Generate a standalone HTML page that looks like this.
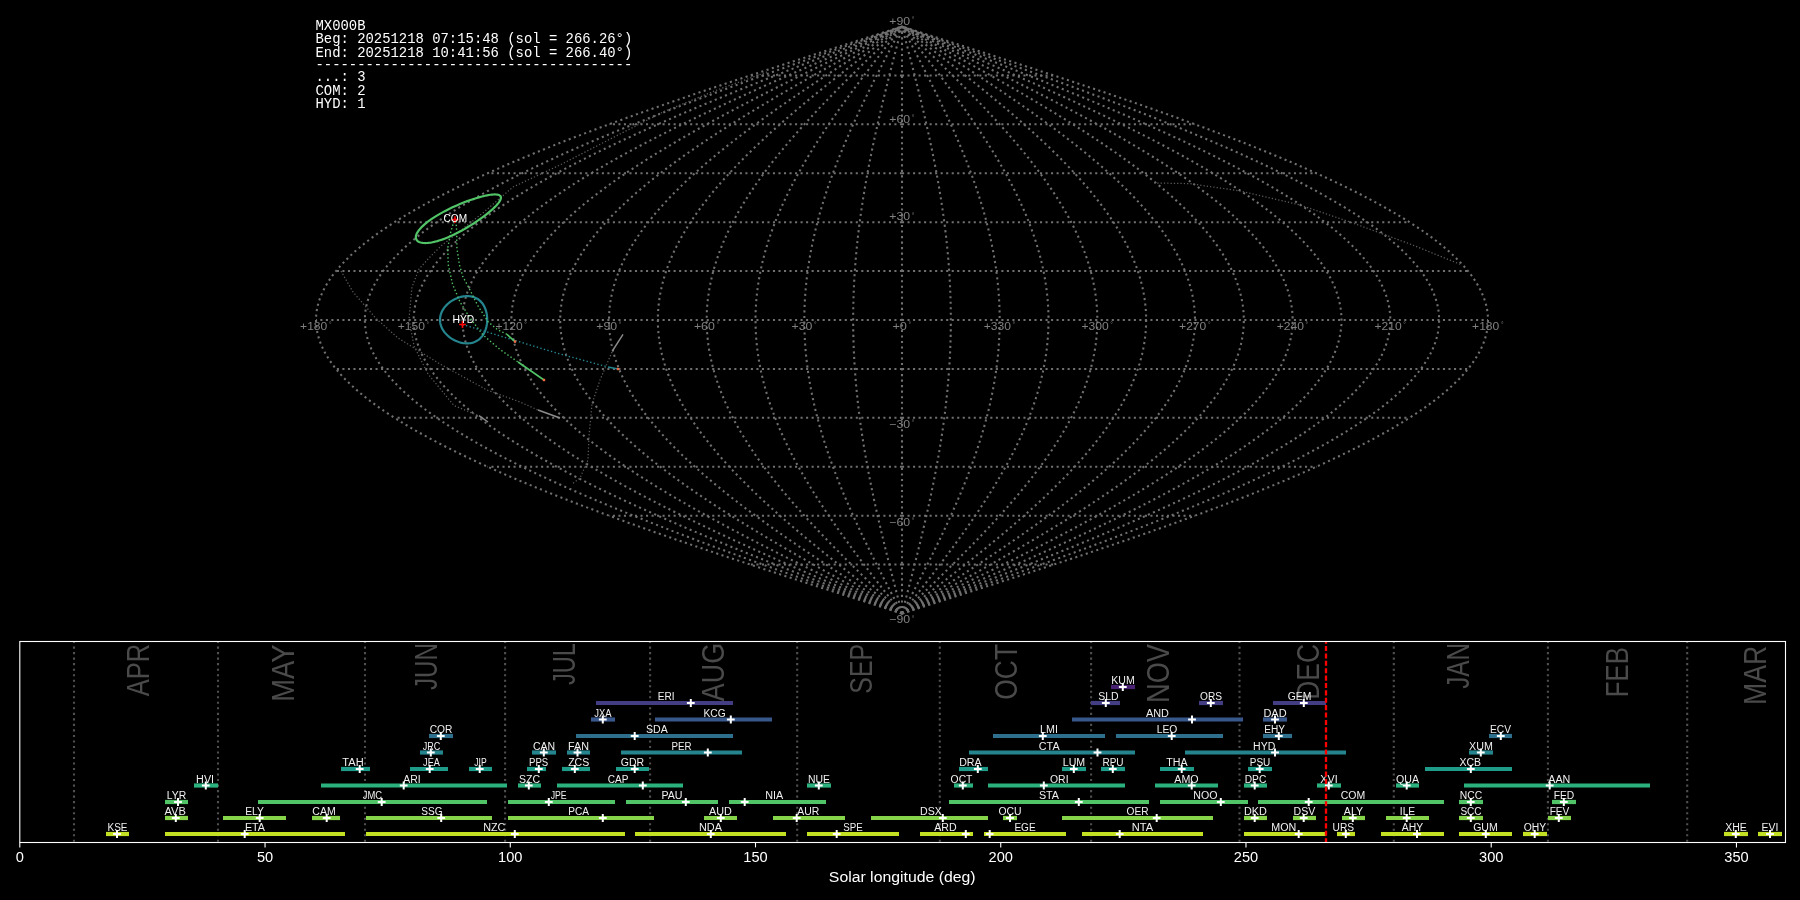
<!DOCTYPE html>
<html><head><meta charset="utf-8"><style>
html,body{margin:0;padding:0;background:#000;width:1800px;height:900px;overflow:hidden}
svg{display:block;will-change:transform}
</style></head><body>
<svg width="1800" height="900" viewBox="0 0 1800 900">
<rect width="1800" height="900" fill="#000"/>
<g fill="none" stroke="#707070" stroke-width="2.08" stroke-dasharray="2.08 3.44">
<path d="M902 564.58 H750.33"/>
<path d="M902 564.58 H1053.67"/>
<path d="M902 515.67 H609"/>
<path d="M902 515.67 H1195"/>
<path d="M902 466.75 H487.64"/>
<path d="M902 466.75 H1316.36"/>
<path d="M902 417.83 H394.51"/>
<path d="M902 417.83 H1409.49"/>
<path d="M902 368.92 H335.97"/>
<path d="M902 368.92 H1468.03"/>
<path d="M902 320 H316"/>
<path d="M902 320 H1488"/>
<path d="M902 271.08 H335.97"/>
<path d="M902 271.08 H1468.03"/>
<path d="M902 222.17 H394.51"/>
<path d="M902 222.17 H1409.49"/>
<path d="M902 173.25 H487.64"/>
<path d="M902 173.25 H1316.36"/>
<path d="M902 124.33 H609"/>
<path d="M902 124.33 H1195"/>
<path d="M902 75.42 H750.33"/>
<path d="M902 75.42 H1053.67"/>
<path d="M902 613.5 L917.34 608.61 L932.67 603.72 L947.98 598.83 L963.25 593.93 L978.49 589.04 L993.67 584.15 L1008.79 579.26 L1023.84 574.37 L1038.8 569.48 L1053.67 564.58 L1068.43 559.69 L1083.08 554.8 L1097.61 549.91 L1112 545.02 L1126.25 540.12 L1140.35 535.23 L1154.28 530.34 L1168.04 525.45 L1181.62 520.56 L1195 515.67 L1208.18 510.77 L1221.16 505.88 L1233.91 500.99 L1246.44 496.1 L1258.73 491.21 L1270.78 486.32 L1282.58 481.43 L1294.11 476.53 L1305.38 471.64 L1316.36 466.75 L1327.07 461.86 L1337.48 456.97 L1347.6 452.07 L1357.41 447.18 L1366.91 442.29 L1376.08 437.4 L1384.94 432.51 L1393.46 427.62 L1401.65 422.73 L1409.49 417.83 L1416.99 412.94 L1424.13 408.05 L1430.91 403.16 L1437.34 398.27 L1443.39 393.38 L1449.08 388.48 L1454.39 383.59 L1459.32 378.7 L1463.87 373.81 L1468.03 368.92 L1471.81 364.02 L1475.19 359.13 L1478.19 354.24 L1480.79 349.35 L1482.99 344.46 L1484.79 339.57 L1486.19 334.68 L1487.2 329.78 L1487.8 324.89 L1488 320 L1487.8 315.11 L1487.2 310.22 L1486.19 305.32 L1484.79 300.43 L1482.99 295.54 L1480.79 290.65 L1478.19 285.76 L1475.19 280.87 L1471.81 275.98 L1468.03 271.08 L1463.87 266.19 L1459.32 261.3 L1454.39 256.41 L1449.08 251.52 L1443.39 246.62 L1437.34 241.73 L1430.91 236.84 L1424.13 231.95 L1416.99 227.06 L1409.49 222.17 L1401.65 217.28 L1393.46 212.38 L1384.94 207.49 L1376.08 202.6 L1366.91 197.71 L1357.41 192.82 L1347.6 187.93 L1337.48 183.03 L1327.07 178.14 L1316.36 173.25 L1305.38 168.36 L1294.11 163.47 L1282.58 158.57 L1270.78 153.68 L1258.73 148.79 L1246.44 143.9 L1233.91 139.01 L1221.16 134.12 L1208.18 129.22 L1195 124.33 L1181.62 119.44 L1168.04 114.55 L1154.28 109.66 L1140.35 104.77 L1126.25 99.88 L1112 94.98 L1097.61 90.09 L1083.08 85.2 L1068.43 80.31 L1053.67 75.42 L1038.8 70.53 L1023.84 65.63 L1008.79 60.74 L993.67 55.85 L978.49 50.96 L963.25 46.07 L947.98 41.18 L932.67 36.28 L917.34 31.39 L902 26.5"/>
<path d="M902 613.5 L916.06 608.61 L930.11 603.72 L944.15 598.83 L958.15 593.93 L972.11 589.04 L986.03 584.15 L999.89 579.26 L1013.68 574.37 L1027.4 569.48 L1041.03 564.58 L1054.56 559.69 L1067.99 554.8 L1081.31 549.91 L1094.5 545.02 L1107.56 540.12 L1120.49 535.23 L1133.26 530.34 L1145.87 525.45 L1158.31 520.56 L1170.58 515.67 L1182.67 510.77 L1194.56 505.88 L1206.25 500.99 L1217.74 496.1 L1229.01 491.21 L1240.05 486.32 L1250.86 481.43 L1261.43 476.53 L1271.76 471.64 L1281.83 466.75 L1291.65 461.86 L1301.19 456.97 L1310.46 452.07 L1319.46 447.18 L1328.16 442.29 L1336.58 437.4 L1344.69 432.51 L1352.51 427.62 L1360.01 422.73 L1367.2 417.83 L1374.07 412.94 L1380.62 408.05 L1386.84 403.16 L1392.73 398.27 L1398.28 393.38 L1403.49 388.48 L1408.36 383.59 L1412.88 378.7 L1417.05 373.81 L1420.86 368.92 L1424.32 364.02 L1427.43 359.13 L1430.17 354.24 L1432.55 349.35 L1434.57 344.46 L1436.22 339.57 L1437.51 334.68 L1438.43 329.78 L1438.98 324.89 L1439.17 320 L1438.98 315.11 L1438.43 310.22 L1437.51 305.32 L1436.22 300.43 L1434.57 295.54 L1432.55 290.65 L1430.17 285.76 L1427.43 280.87 L1424.32 275.98 L1420.86 271.08 L1417.05 266.19 L1412.88 261.3 L1408.36 256.41 L1403.49 251.52 L1398.28 246.62 L1392.73 241.73 L1386.84 236.84 L1380.62 231.95 L1374.07 227.06 L1367.2 222.17 L1360.01 217.28 L1352.51 212.38 L1344.69 207.49 L1336.58 202.6 L1328.16 197.71 L1319.46 192.82 L1310.46 187.93 L1301.19 183.03 L1291.65 178.14 L1281.83 173.25 L1271.76 168.36 L1261.43 163.47 L1250.86 158.57 L1240.05 153.68 L1229.01 148.79 L1217.74 143.9 L1206.25 139.01 L1194.56 134.12 L1182.67 129.22 L1170.58 124.33 L1158.31 119.44 L1145.87 114.55 L1133.26 109.66 L1120.49 104.77 L1107.56 99.88 L1094.5 94.98 L1081.31 90.09 L1067.99 85.2 L1054.56 80.31 L1041.03 75.42 L1027.4 70.53 L1013.68 65.63 L999.89 60.74 L986.03 55.85 L972.11 50.96 L958.15 46.07 L944.15 41.18 L930.11 36.28 L916.06 31.39 L902 26.5"/>
<path d="M902 613.5 L914.78 608.61 L927.56 603.72 L940.31 598.83 L953.04 593.93 L965.74 589.04 L978.39 584.15 L990.99 579.26 L1003.53 574.37 L1016 569.48 L1028.39 564.58 L1040.69 559.69 L1052.9 554.8 L1065.01 549.91 L1077 545.02 L1088.88 540.12 L1100.62 535.23 L1112.23 530.34 L1123.7 525.45 L1135.01 520.56 L1146.17 515.67 L1157.15 510.77 L1167.97 505.88 L1178.6 500.99 L1189.04 496.1 L1199.28 491.21 L1209.32 486.32 L1219.15 481.43 L1228.76 476.53 L1238.15 471.64 L1247.3 466.75 L1256.22 461.86 L1264.9 456.97 L1273.33 452.07 L1281.51 447.18 L1289.42 442.29 L1297.07 437.4 L1304.45 432.51 L1311.55 427.62 L1318.37 422.73 L1324.91 417.83 L1331.16 412.94 L1337.11 408.05 L1342.76 403.16 L1348.11 398.27 L1353.16 393.38 L1357.9 388.48 L1362.32 383.59 L1366.43 378.7 L1370.22 373.81 L1373.69 368.92 L1376.84 364.02 L1379.66 359.13 L1382.16 354.24 L1384.32 349.35 L1386.16 344.46 L1387.66 339.57 L1388.83 334.68 L1389.66 329.78 L1390.17 324.89 L1390.33 320 L1390.17 315.11 L1389.66 310.22 L1388.83 305.32 L1387.66 300.43 L1386.16 295.54 L1384.32 290.65 L1382.16 285.76 L1379.66 280.87 L1376.84 275.98 L1373.69 271.08 L1370.22 266.19 L1366.43 261.3 L1362.32 256.41 L1357.9 251.52 L1353.16 246.62 L1348.11 241.73 L1342.76 236.84 L1337.11 231.95 L1331.16 227.06 L1324.91 222.17 L1318.37 217.28 L1311.55 212.38 L1304.45 207.49 L1297.07 202.6 L1289.42 197.71 L1281.51 192.82 L1273.33 187.93 L1264.9 183.03 L1256.22 178.14 L1247.3 173.25 L1238.15 168.36 L1228.76 163.47 L1219.15 158.57 L1209.32 153.68 L1199.28 148.79 L1189.04 143.9 L1178.6 139.01 L1167.97 134.12 L1157.15 129.22 L1146.17 124.33 L1135.01 119.44 L1123.7 114.55 L1112.23 109.66 L1100.62 104.77 L1088.88 99.88 L1077 94.98 L1065.01 90.09 L1052.9 85.2 L1040.69 80.31 L1028.39 75.42 L1016 70.53 L1003.53 65.63 L990.99 60.74 L978.39 55.85 L965.74 50.96 L953.04 46.07 L940.31 41.18 L927.56 36.28 L914.78 31.39 L902 26.5"/>
<path d="M902 613.5 L913.5 608.61 L925 603.72 L936.48 598.83 L947.94 593.93 L959.37 589.04 L970.75 584.15 L982.09 579.26 L993.38 574.37 L1004.6 569.48 L1015.75 564.58 L1026.82 559.69 L1037.81 554.8 L1048.71 549.91 L1059.5 545.02 L1070.19 540.12 L1080.76 535.23 L1091.21 530.34 L1101.53 525.45 L1111.71 520.56 L1121.75 515.67 L1131.64 510.77 L1141.37 505.88 L1150.94 500.99 L1160.33 496.1 L1169.55 491.21 L1178.59 486.32 L1187.43 481.43 L1196.08 476.53 L1204.53 471.64 L1212.77 466.75 L1220.8 461.86 L1228.61 456.97 L1236.2 452.07 L1243.56 447.18 L1250.68 442.29 L1257.56 437.4 L1264.2 432.51 L1270.6 427.62 L1276.74 422.73 L1282.62 417.83 L1288.24 412.94 L1293.6 408.05 L1298.69 403.16 L1303.5 398.27 L1308.05 393.38 L1312.31 388.48 L1316.29 383.59 L1319.99 378.7 L1323.4 373.81 L1326.52 368.92 L1329.36 364.02 L1331.9 359.13 L1334.14 354.24 L1336.09 349.35 L1337.74 344.46 L1339.09 339.57 L1340.15 334.68 L1340.9 329.78 L1341.35 324.89 L1341.5 320 L1341.35 315.11 L1340.9 310.22 L1340.15 305.32 L1339.09 300.43 L1337.74 295.54 L1336.09 290.65 L1334.14 285.76 L1331.9 280.87 L1329.36 275.98 L1326.52 271.08 L1323.4 266.19 L1319.99 261.3 L1316.29 256.41 L1312.31 251.52 L1308.05 246.62 L1303.5 241.73 L1298.69 236.84 L1293.6 231.95 L1288.24 227.06 L1282.62 222.17 L1276.74 217.28 L1270.6 212.38 L1264.2 207.49 L1257.56 202.6 L1250.68 197.71 L1243.56 192.82 L1236.2 187.93 L1228.61 183.03 L1220.8 178.14 L1212.77 173.25 L1204.53 168.36 L1196.08 163.47 L1187.43 158.57 L1178.59 153.68 L1169.55 148.79 L1160.33 143.9 L1150.94 139.01 L1141.37 134.12 L1131.64 129.22 L1121.75 124.33 L1111.71 119.44 L1101.53 114.55 L1091.21 109.66 L1080.76 104.77 L1070.19 99.88 L1059.5 94.98 L1048.71 90.09 L1037.81 85.2 L1026.82 80.31 L1015.75 75.42 L1004.6 70.53 L993.38 65.63 L982.09 60.74 L970.75 55.85 L959.37 50.96 L947.94 46.07 L936.48 41.18 L925 36.28 L913.5 31.39 L902 26.5"/>
<path d="M902 613.5 L912.23 608.61 L922.45 603.72 L932.65 598.83 L942.84 593.93 L952.99 589.04 L963.11 584.15 L973.19 579.26 L983.22 574.37 L993.2 569.48 L1003.11 564.58 L1012.96 559.69 L1022.72 554.8 L1032.41 549.91 L1042 545.02 L1051.5 540.12 L1060.9 535.23 L1070.19 530.34 L1079.36 525.45 L1088.41 520.56 L1097.33 515.67 L1106.12 510.77 L1114.77 505.88 L1123.28 500.99 L1131.63 496.1 L1139.82 491.21 L1147.85 486.32 L1155.72 481.43 L1163.41 476.53 L1170.92 471.64 L1178.24 466.75 L1185.38 461.86 L1192.32 456.97 L1199.07 452.07 L1205.61 447.18 L1211.94 442.29 L1218.06 437.4 L1223.96 432.51 L1229.64 427.62 L1235.1 422.73 L1240.33 417.83 L1245.32 412.94 L1250.09 408.05 L1254.61 403.16 L1258.89 398.27 L1262.93 393.38 L1266.72 388.48 L1270.26 383.59 L1273.55 378.7 L1276.58 373.81 L1279.36 368.92 L1281.87 364.02 L1284.13 359.13 L1286.12 354.24 L1287.86 349.35 L1289.32 344.46 L1290.53 339.57 L1291.46 334.68 L1292.13 329.78 L1292.53 324.89 L1292.67 320 L1292.53 315.11 L1292.13 310.22 L1291.46 305.32 L1290.53 300.43 L1289.32 295.54 L1287.86 290.65 L1286.12 285.76 L1284.13 280.87 L1281.87 275.98 L1279.36 271.08 L1276.58 266.19 L1273.55 261.3 L1270.26 256.41 L1266.72 251.52 L1262.93 246.62 L1258.89 241.73 L1254.61 236.84 L1250.09 231.95 L1245.32 227.06 L1240.33 222.17 L1235.1 217.28 L1229.64 212.38 L1223.96 207.49 L1218.06 202.6 L1211.94 197.71 L1205.61 192.82 L1199.07 187.93 L1192.32 183.03 L1185.38 178.14 L1178.24 173.25 L1170.92 168.36 L1163.41 163.47 L1155.72 158.57 L1147.85 153.68 L1139.82 148.79 L1131.63 143.9 L1123.28 139.01 L1114.77 134.12 L1106.12 129.22 L1097.33 124.33 L1088.41 119.44 L1079.36 114.55 L1070.19 109.66 L1060.9 104.77 L1051.5 99.88 L1042 94.98 L1032.41 90.09 L1022.72 85.2 L1012.96 80.31 L1003.11 75.42 L993.2 70.53 L983.22 65.63 L973.19 60.74 L963.11 55.85 L952.99 50.96 L942.84 46.07 L932.65 41.18 L922.45 36.28 L912.23 31.39 L902 26.5"/>
<path d="M902 613.5 L910.95 608.61 L919.89 603.72 L928.82 598.83 L937.73 593.93 L946.62 589.04 L955.47 584.15 L964.29 579.26 L973.07 574.37 L981.8 569.48 L990.47 564.58 L999.09 559.69 L1007.63 554.8 L1016.11 549.91 L1024.5 545.02 L1032.81 540.12 L1041.04 535.23 L1049.16 530.34 L1057.19 525.45 L1065.11 520.56 L1072.92 515.67 L1080.61 510.77 L1088.18 505.88 L1095.62 500.99 L1102.92 496.1 L1110.09 491.21 L1117.12 486.32 L1124 481.43 L1130.73 476.53 L1137.3 471.64 L1143.71 466.75 L1149.96 461.86 L1156.03 456.97 L1161.93 452.07 L1167.65 447.18 L1173.19 442.29 L1178.55 437.4 L1183.71 432.51 L1188.69 427.62 L1193.46 422.73 L1198.04 417.83 L1202.41 412.94 L1206.58 408.05 L1210.53 403.16 L1214.28 398.27 L1217.81 393.38 L1221.13 388.48 L1224.23 383.59 L1227.1 378.7 L1229.76 373.81 L1232.19 368.92 L1234.39 364.02 L1236.36 359.13 L1238.11 354.24 L1239.62 349.35 L1240.91 344.46 L1241.96 339.57 L1242.78 334.68 L1243.36 329.78 L1243.72 324.89 L1243.83 320 L1243.72 315.11 L1243.36 310.22 L1242.78 305.32 L1241.96 300.43 L1240.91 295.54 L1239.62 290.65 L1238.11 285.76 L1236.36 280.87 L1234.39 275.98 L1232.19 271.08 L1229.76 266.19 L1227.1 261.3 L1224.23 256.41 L1221.13 251.52 L1217.81 246.62 L1214.28 241.73 L1210.53 236.84 L1206.58 231.95 L1202.41 227.06 L1198.04 222.17 L1193.46 217.28 L1188.69 212.38 L1183.71 207.49 L1178.55 202.6 L1173.19 197.71 L1167.65 192.82 L1161.93 187.93 L1156.03 183.03 L1149.96 178.14 L1143.71 173.25 L1137.3 168.36 L1130.73 163.47 L1124 158.57 L1117.12 153.68 L1110.09 148.79 L1102.92 143.9 L1095.62 139.01 L1088.18 134.12 L1080.61 129.22 L1072.92 124.33 L1065.11 119.44 L1057.19 114.55 L1049.16 109.66 L1041.04 104.77 L1032.81 99.88 L1024.5 94.98 L1016.11 90.09 L1007.63 85.2 L999.09 80.31 L990.47 75.42 L981.8 70.53 L973.07 65.63 L964.29 60.74 L955.47 55.85 L946.62 50.96 L937.73 46.07 L928.82 41.18 L919.89 36.28 L910.95 31.39 L902 26.5"/>
<path d="M902 613.5 L909.67 608.61 L917.33 603.72 L924.99 598.83 L932.63 593.93 L940.24 589.04 L947.84 584.15 L955.4 579.26 L962.92 574.37 L970.4 569.48 L977.83 564.58 L985.22 559.69 L992.54 554.8 L999.81 549.91 L1007 545.02 L1014.13 540.12 L1021.17 535.23 L1028.14 530.34 L1035.02 525.45 L1041.81 520.56 L1048.5 515.67 L1055.09 510.77 L1061.58 505.88 L1067.96 500.99 L1074.22 496.1 L1080.37 491.21 L1086.39 486.32 L1092.29 481.43 L1098.06 476.53 L1103.69 471.64 L1109.18 466.75 L1114.53 461.86 L1119.74 456.97 L1124.8 452.07 L1129.7 447.18 L1134.45 442.29 L1139.04 437.4 L1143.47 432.51 L1147.73 427.62 L1151.82 422.73 L1155.75 417.83 L1159.49 412.94 L1163.06 408.05 L1166.46 403.16 L1169.67 398.27 L1172.7 393.38 L1175.54 388.48 L1178.19 383.59 L1180.66 378.7 L1182.93 373.81 L1185.02 368.92 L1186.9 364.02 L1188.6 359.13 L1190.09 354.24 L1191.39 349.35 L1192.49 344.46 L1193.39 339.57 L1194.1 334.68 L1194.6 329.78 L1194.9 324.89 L1195 320 L1194.9 315.11 L1194.6 310.22 L1194.1 305.32 L1193.39 300.43 L1192.49 295.54 L1191.39 290.65 L1190.09 285.76 L1188.6 280.87 L1186.9 275.98 L1185.02 271.08 L1182.93 266.19 L1180.66 261.3 L1178.19 256.41 L1175.54 251.52 L1172.7 246.62 L1169.67 241.73 L1166.46 236.84 L1163.06 231.95 L1159.49 227.06 L1155.75 222.17 L1151.82 217.28 L1147.73 212.38 L1143.47 207.49 L1139.04 202.6 L1134.45 197.71 L1129.7 192.82 L1124.8 187.93 L1119.74 183.03 L1114.53 178.14 L1109.18 173.25 L1103.69 168.36 L1098.06 163.47 L1092.29 158.57 L1086.39 153.68 L1080.37 148.79 L1074.22 143.9 L1067.96 139.01 L1061.58 134.12 L1055.09 129.22 L1048.5 124.33 L1041.81 119.44 L1035.02 114.55 L1028.14 109.66 L1021.17 104.77 L1014.13 99.88 L1007 94.98 L999.81 90.09 L992.54 85.2 L985.22 80.31 L977.83 75.42 L970.4 70.53 L962.92 65.63 L955.4 60.74 L947.84 55.85 L940.24 50.96 L932.63 46.07 L924.99 41.18 L917.33 36.28 L909.67 31.39 L902 26.5"/>
<path d="M902 613.5 L908.39 608.61 L914.78 603.72 L921.16 598.83 L927.52 593.93 L933.87 589.04 L940.2 584.15 L946.5 579.26 L952.77 574.37 L959 569.48 L965.19 564.58 L971.35 559.69 L977.45 554.8 L983.5 549.91 L989.5 545.02 L995.44 540.12 L1001.31 535.23 L1007.12 530.34 L1012.85 525.45 L1018.51 520.56 L1024.08 515.67 L1029.58 510.77 L1034.98 505.88 L1040.3 500.99 L1045.52 496.1 L1050.64 491.21 L1055.66 486.32 L1060.57 481.43 L1065.38 476.53 L1070.07 471.64 L1074.65 466.75 L1079.11 461.86 L1083.45 456.97 L1087.67 452.07 L1091.75 447.18 L1095.71 442.29 L1099.53 437.4 L1103.22 432.51 L1106.78 427.62 L1110.19 422.73 L1113.45 417.83 L1116.58 412.94 L1119.55 408.05 L1122.38 403.16 L1125.06 398.27 L1127.58 393.38 L1129.95 388.48 L1132.16 383.59 L1134.22 378.7 L1136.11 373.81 L1137.85 368.92 L1139.42 364.02 L1140.83 359.13 L1142.08 354.24 L1143.16 349.35 L1144.08 344.46 L1144.83 339.57 L1145.41 334.68 L1145.83 329.78 L1146.08 324.89 L1146.17 320 L1146.08 315.11 L1145.83 310.22 L1145.41 305.32 L1144.83 300.43 L1144.08 295.54 L1143.16 290.65 L1142.08 285.76 L1140.83 280.87 L1139.42 275.98 L1137.85 271.08 L1136.11 266.19 L1134.22 261.3 L1132.16 256.41 L1129.95 251.52 L1127.58 246.62 L1125.06 241.73 L1122.38 236.84 L1119.55 231.95 L1116.58 227.06 L1113.45 222.17 L1110.19 217.28 L1106.78 212.38 L1103.22 207.49 L1099.53 202.6 L1095.71 197.71 L1091.75 192.82 L1087.67 187.93 L1083.45 183.03 L1079.11 178.14 L1074.65 173.25 L1070.07 168.36 L1065.38 163.47 L1060.57 158.57 L1055.66 153.68 L1050.64 148.79 L1045.52 143.9 L1040.3 139.01 L1034.98 134.12 L1029.58 129.22 L1024.08 124.33 L1018.51 119.44 L1012.85 114.55 L1007.12 109.66 L1001.31 104.77 L995.44 99.88 L989.5 94.98 L983.5 90.09 L977.45 85.2 L971.35 80.31 L965.19 75.42 L959 70.53 L952.77 65.63 L946.5 60.74 L940.2 55.85 L933.87 50.96 L927.52 46.07 L921.16 41.18 L914.78 36.28 L908.39 31.39 L902 26.5"/>
<path d="M902 613.5 L907.11 608.61 L912.22 603.72 L917.33 598.83 L922.42 593.93 L927.5 589.04 L932.56 584.15 L937.6 579.26 L942.61 574.37 L947.6 569.48 L952.56 564.58 L957.48 559.69 L962.36 554.8 L967.2 549.91 L972 545.02 L976.75 540.12 L981.45 535.23 L986.09 530.34 L990.68 525.45 L995.21 520.56 L999.67 515.67 L1004.06 510.77 L1008.39 505.88 L1012.64 500.99 L1016.81 496.1 L1020.91 491.21 L1024.93 486.32 L1028.86 481.43 L1032.7 476.53 L1036.46 471.64 L1040.12 466.75 L1043.69 461.86 L1047.16 456.97 L1050.53 452.07 L1053.8 447.18 L1056.97 442.29 L1060.03 437.4 L1062.98 432.51 L1065.82 427.62 L1068.55 422.73 L1071.16 417.83 L1073.66 412.94 L1076.04 408.05 L1078.3 403.16 L1080.45 398.27 L1082.46 393.38 L1084.36 388.48 L1086.13 383.59 L1087.77 378.7 L1089.29 373.81 L1090.68 368.92 L1091.94 364.02 L1093.06 359.13 L1094.06 354.24 L1094.93 349.35 L1095.66 344.46 L1096.26 339.57 L1096.73 334.68 L1097.07 329.78 L1097.27 324.89 L1097.33 320 L1097.27 315.11 L1097.07 310.22 L1096.73 305.32 L1096.26 300.43 L1095.66 295.54 L1094.93 290.65 L1094.06 285.76 L1093.06 280.87 L1091.94 275.98 L1090.68 271.08 L1089.29 266.19 L1087.77 261.3 L1086.13 256.41 L1084.36 251.52 L1082.46 246.62 L1080.45 241.73 L1078.3 236.84 L1076.04 231.95 L1073.66 227.06 L1071.16 222.17 L1068.55 217.28 L1065.82 212.38 L1062.98 207.49 L1060.03 202.6 L1056.97 197.71 L1053.8 192.82 L1050.53 187.93 L1047.16 183.03 L1043.69 178.14 L1040.12 173.25 L1036.46 168.36 L1032.7 163.47 L1028.86 158.57 L1024.93 153.68 L1020.91 148.79 L1016.81 143.9 L1012.64 139.01 L1008.39 134.12 L1004.06 129.22 L999.67 124.33 L995.21 119.44 L990.68 114.55 L986.09 109.66 L981.45 104.77 L976.75 99.88 L972 94.98 L967.2 90.09 L962.36 85.2 L957.48 80.31 L952.56 75.42 L947.6 70.53 L942.61 65.63 L937.6 60.74 L932.56 55.85 L927.5 50.96 L922.42 46.07 L917.33 41.18 L912.22 36.28 L907.11 31.39 L902 26.5"/>
<path d="M902 613.5 L905.83 608.61 L909.67 603.72 L913.49 598.83 L917.31 593.93 L921.12 589.04 L924.92 584.15 L928.7 579.26 L932.46 574.37 L936.2 569.48 L939.92 564.58 L943.61 559.69 L947.27 554.8 L950.9 549.91 L954.5 545.02 L958.06 540.12 L961.59 535.23 L965.07 530.34 L968.51 525.45 L971.9 520.56 L975.25 515.67 L978.55 510.77 L981.79 505.88 L984.98 500.99 L988.11 496.1 L991.18 491.21 L994.2 486.32 L997.14 481.43 L1000.03 476.53 L1002.84 471.64 L1005.59 466.75 L1008.27 461.86 L1010.87 456.97 L1013.4 452.07 L1015.85 447.18 L1018.23 442.29 L1020.52 437.4 L1022.73 432.51 L1024.87 427.62 L1026.91 422.73 L1028.87 417.83 L1030.75 412.94 L1032.53 408.05 L1034.23 403.16 L1035.83 398.27 L1037.35 393.38 L1038.77 388.48 L1040.1 383.59 L1041.33 378.7 L1042.47 373.81 L1043.51 368.92 L1044.45 364.02 L1045.3 359.13 L1046.05 354.24 L1046.7 349.35 L1047.25 344.46 L1047.7 339.57 L1048.05 334.68 L1048.3 329.78 L1048.45 324.89 L1048.5 320 L1048.45 315.11 L1048.3 310.22 L1048.05 305.32 L1047.7 300.43 L1047.25 295.54 L1046.7 290.65 L1046.05 285.76 L1045.3 280.87 L1044.45 275.98 L1043.51 271.08 L1042.47 266.19 L1041.33 261.3 L1040.1 256.41 L1038.77 251.52 L1037.35 246.62 L1035.83 241.73 L1034.23 236.84 L1032.53 231.95 L1030.75 227.06 L1028.87 222.17 L1026.91 217.28 L1024.87 212.38 L1022.73 207.49 L1020.52 202.6 L1018.23 197.71 L1015.85 192.82 L1013.4 187.93 L1010.87 183.03 L1008.27 178.14 L1005.59 173.25 L1002.84 168.36 L1000.03 163.47 L997.14 158.57 L994.2 153.68 L991.18 148.79 L988.11 143.9 L984.98 139.01 L981.79 134.12 L978.55 129.22 L975.25 124.33 L971.9 119.44 L968.51 114.55 L965.07 109.66 L961.59 104.77 L958.06 99.88 L954.5 94.98 L950.9 90.09 L947.27 85.2 L943.61 80.31 L939.92 75.42 L936.2 70.53 L932.46 65.63 L928.7 60.74 L924.92 55.85 L921.12 50.96 L917.31 46.07 L913.49 41.18 L909.67 36.28 L905.83 31.39 L902 26.5"/>
<path d="M902 613.5 L904.56 608.61 L907.11 603.72 L909.66 598.83 L912.21 593.93 L914.75 589.04 L917.28 584.15 L919.8 579.26 L922.31 574.37 L924.8 569.48 L927.28 564.58 L929.74 559.69 L932.18 554.8 L934.6 549.91 L937 545.02 L939.38 540.12 L941.72 535.23 L944.05 530.34 L946.34 525.45 L948.6 520.56 L950.83 515.67 L953.03 510.77 L955.19 505.88 L957.32 500.99 L959.41 496.1 L961.46 491.21 L963.46 486.32 L965.43 481.43 L967.35 476.53 L969.23 471.64 L971.06 466.75 L972.84 461.86 L974.58 456.97 L976.27 452.07 L977.9 447.18 L979.48 442.29 L981.01 437.4 L982.49 432.51 L983.91 427.62 L985.27 422.73 L986.58 417.83 L987.83 412.94 L989.02 408.05 L990.15 403.16 L991.22 398.27 L992.23 393.38 L993.18 388.48 L994.06 383.59 L994.89 378.7 L995.64 373.81 L996.34 368.92 L996.97 364.02 L997.53 359.13 L998.03 354.24 L998.46 349.35 L998.83 344.46 L999.13 339.57 L999.37 334.68 L999.53 329.78 L999.63 324.89 L999.67 320 L999.63 315.11 L999.53 310.22 L999.37 305.32 L999.13 300.43 L998.83 295.54 L998.46 290.65 L998.03 285.76 L997.53 280.87 L996.97 275.98 L996.34 271.08 L995.64 266.19 L994.89 261.3 L994.06 256.41 L993.18 251.52 L992.23 246.62 L991.22 241.73 L990.15 236.84 L989.02 231.95 L987.83 227.06 L986.58 222.17 L985.27 217.28 L983.91 212.38 L982.49 207.49 L981.01 202.6 L979.48 197.71 L977.9 192.82 L976.27 187.93 L974.58 183.03 L972.84 178.14 L971.06 173.25 L969.23 168.36 L967.35 163.47 L965.43 158.57 L963.46 153.68 L961.46 148.79 L959.41 143.9 L957.32 139.01 L955.19 134.12 L953.03 129.22 L950.83 124.33 L948.6 119.44 L946.34 114.55 L944.05 109.66 L941.72 104.77 L939.38 99.88 L937 94.98 L934.6 90.09 L932.18 85.2 L929.74 80.31 L927.28 75.42 L924.8 70.53 L922.31 65.63 L919.8 60.74 L917.28 55.85 L914.75 50.96 L912.21 46.07 L909.66 41.18 L907.11 36.28 L904.56 31.39 L902 26.5"/>
<path d="M902 613.5 L903.28 608.61 L904.56 603.72 L905.83 598.83 L907.1 593.93 L908.37 589.04 L909.64 584.15 L910.9 579.26 L912.15 574.37 L913.4 569.48 L914.64 564.58 L915.87 559.69 L917.09 554.8 L918.3 549.91 L919.5 545.02 L920.69 540.12 L921.86 535.23 L923.02 530.34 L924.17 525.45 L925.3 520.56 L926.42 515.67 L927.52 510.77 L928.6 505.88 L929.66 500.99 L930.7 496.1 L931.73 491.21 L932.73 486.32 L933.71 481.43 L934.68 476.53 L935.61 471.64 L936.53 466.75 L937.42 461.86 L938.29 456.97 L939.13 452.07 L939.95 447.18 L940.74 442.29 L941.51 437.4 L942.24 432.51 L942.96 427.62 L943.64 422.73 L944.29 417.83 L944.92 412.94 L945.51 408.05 L946.08 403.16 L946.61 398.27 L947.12 393.38 L947.59 388.48 L948.03 383.59 L948.44 378.7 L948.82 373.81 L949.17 368.92 L949.48 364.02 L949.77 359.13 L950.02 354.24 L950.23 349.35 L950.42 344.46 L950.57 339.57 L950.68 334.68 L950.77 329.78 L950.82 324.89 L950.83 320 L950.82 315.11 L950.77 310.22 L950.68 305.32 L950.57 300.43 L950.42 295.54 L950.23 290.65 L950.02 285.76 L949.77 280.87 L949.48 275.98 L949.17 271.08 L948.82 266.19 L948.44 261.3 L948.03 256.41 L947.59 251.52 L947.12 246.62 L946.61 241.73 L946.08 236.84 L945.51 231.95 L944.92 227.06 L944.29 222.17 L943.64 217.28 L942.96 212.38 L942.24 207.49 L941.51 202.6 L940.74 197.71 L939.95 192.82 L939.13 187.93 L938.29 183.03 L937.42 178.14 L936.53 173.25 L935.61 168.36 L934.68 163.47 L933.71 158.57 L932.73 153.68 L931.73 148.79 L930.7 143.9 L929.66 139.01 L928.6 134.12 L927.52 129.22 L926.42 124.33 L925.3 119.44 L924.17 114.55 L923.02 109.66 L921.86 104.77 L920.69 99.88 L919.5 94.98 L918.3 90.09 L917.09 85.2 L915.87 80.31 L914.64 75.42 L913.4 70.53 L912.15 65.63 L910.9 60.74 L909.64 55.85 L908.37 50.96 L907.1 46.07 L905.83 41.18 L904.56 36.28 L903.28 31.39 L902 26.5"/>
<path d="M902 613.5 L902 608.61 L902 603.72 L902 598.83 L902 593.93 L902 589.04 L902 584.15 L902 579.26 L902 574.37 L902 569.48 L902 564.58 L902 559.69 L902 554.8 L902 549.91 L902 545.02 L902 540.12 L902 535.23 L902 530.34 L902 525.45 L902 520.56 L902 515.67 L902 510.77 L902 505.88 L902 500.99 L902 496.1 L902 491.21 L902 486.32 L902 481.43 L902 476.53 L902 471.64 L902 466.75 L902 461.86 L902 456.97 L902 452.07 L902 447.18 L902 442.29 L902 437.4 L902 432.51 L902 427.62 L902 422.73 L902 417.83 L902 412.94 L902 408.05 L902 403.16 L902 398.27 L902 393.38 L902 388.48 L902 383.59 L902 378.7 L902 373.81 L902 368.92 L902 364.02 L902 359.13 L902 354.24 L902 349.35 L902 344.46 L902 339.57 L902 334.68 L902 329.78 L902 324.89 L902 320 L902 315.11 L902 310.22 L902 305.32 L902 300.43 L902 295.54 L902 290.65 L902 285.76 L902 280.87 L902 275.98 L902 271.08 L902 266.19 L902 261.3 L902 256.41 L902 251.52 L902 246.62 L902 241.73 L902 236.84 L902 231.95 L902 227.06 L902 222.17 L902 217.28 L902 212.38 L902 207.49 L902 202.6 L902 197.71 L902 192.82 L902 187.93 L902 183.03 L902 178.14 L902 173.25 L902 168.36 L902 163.47 L902 158.57 L902 153.68 L902 148.79 L902 143.9 L902 139.01 L902 134.12 L902 129.22 L902 124.33 L902 119.44 L902 114.55 L902 109.66 L902 104.77 L902 99.88 L902 94.98 L902 90.09 L902 85.2 L902 80.31 L902 75.42 L902 70.53 L902 65.63 L902 60.74 L902 55.85 L902 50.96 L902 46.07 L902 41.18 L902 36.28 L902 31.39 L902 26.5"/>
<path d="M902 613.5 L900.72 608.61 L899.44 603.72 L898.17 598.83 L896.9 593.93 L895.63 589.04 L894.36 584.15 L893.1 579.26 L891.85 574.37 L890.6 569.48 L889.36 564.58 L888.13 559.69 L886.91 554.8 L885.7 549.91 L884.5 545.02 L883.31 540.12 L882.14 535.23 L880.98 530.34 L879.83 525.45 L878.7 520.56 L877.58 515.67 L876.48 510.77 L875.4 505.88 L874.34 500.99 L873.3 496.1 L872.27 491.21 L871.27 486.32 L870.29 481.43 L869.32 476.53 L868.39 471.64 L867.47 466.75 L866.58 461.86 L865.71 456.97 L864.87 452.07 L864.05 447.18 L863.26 442.29 L862.49 437.4 L861.76 432.51 L861.04 427.62 L860.36 422.73 L859.71 417.83 L859.08 412.94 L858.49 408.05 L857.92 403.16 L857.39 398.27 L856.88 393.38 L856.41 388.48 L855.97 383.59 L855.56 378.7 L855.18 373.81 L854.83 368.92 L854.52 364.02 L854.23 359.13 L853.98 354.24 L853.77 349.35 L853.58 344.46 L853.43 339.57 L853.32 334.68 L853.23 329.78 L853.18 324.89 L853.17 320 L853.18 315.11 L853.23 310.22 L853.32 305.32 L853.43 300.43 L853.58 295.54 L853.77 290.65 L853.98 285.76 L854.23 280.87 L854.52 275.98 L854.83 271.08 L855.18 266.19 L855.56 261.3 L855.97 256.41 L856.41 251.52 L856.88 246.62 L857.39 241.73 L857.92 236.84 L858.49 231.95 L859.08 227.06 L859.71 222.17 L860.36 217.28 L861.04 212.38 L861.76 207.49 L862.49 202.6 L863.26 197.71 L864.05 192.82 L864.87 187.93 L865.71 183.03 L866.58 178.14 L867.47 173.25 L868.39 168.36 L869.32 163.47 L870.29 158.57 L871.27 153.68 L872.27 148.79 L873.3 143.9 L874.34 139.01 L875.4 134.12 L876.48 129.22 L877.58 124.33 L878.7 119.44 L879.83 114.55 L880.98 109.66 L882.14 104.77 L883.31 99.88 L884.5 94.98 L885.7 90.09 L886.91 85.2 L888.13 80.31 L889.36 75.42 L890.6 70.53 L891.85 65.63 L893.1 60.74 L894.36 55.85 L895.63 50.96 L896.9 46.07 L898.17 41.18 L899.44 36.28 L900.72 31.39 L902 26.5"/>
<path d="M902 613.5 L899.44 608.61 L896.89 603.72 L894.34 598.83 L891.79 593.93 L889.25 589.04 L886.72 584.15 L884.2 579.26 L881.69 574.37 L879.2 569.48 L876.72 564.58 L874.26 559.69 L871.82 554.8 L869.4 549.91 L867 545.02 L864.62 540.12 L862.28 535.23 L859.95 530.34 L857.66 525.45 L855.4 520.56 L853.17 515.67 L850.97 510.77 L848.81 505.88 L846.68 500.99 L844.59 496.1 L842.54 491.21 L840.54 486.32 L838.57 481.43 L836.65 476.53 L834.77 471.64 L832.94 466.75 L831.16 461.86 L829.42 456.97 L827.73 452.07 L826.1 447.18 L824.52 442.29 L822.99 437.4 L821.51 432.51 L820.09 427.62 L818.73 422.73 L817.42 417.83 L816.17 412.94 L814.98 408.05 L813.85 403.16 L812.78 398.27 L811.77 393.38 L810.82 388.48 L809.94 383.59 L809.11 378.7 L808.36 373.81 L807.66 368.92 L807.03 364.02 L806.47 359.13 L805.97 354.24 L805.54 349.35 L805.17 344.46 L804.87 339.57 L804.63 334.68 L804.47 329.78 L804.37 324.89 L804.33 320 L804.37 315.11 L804.47 310.22 L804.63 305.32 L804.87 300.43 L805.17 295.54 L805.54 290.65 L805.97 285.76 L806.47 280.87 L807.03 275.98 L807.66 271.08 L808.36 266.19 L809.11 261.3 L809.94 256.41 L810.82 251.52 L811.77 246.62 L812.78 241.73 L813.85 236.84 L814.98 231.95 L816.17 227.06 L817.42 222.17 L818.73 217.28 L820.09 212.38 L821.51 207.49 L822.99 202.6 L824.52 197.71 L826.1 192.82 L827.73 187.93 L829.42 183.03 L831.16 178.14 L832.94 173.25 L834.77 168.36 L836.65 163.47 L838.57 158.57 L840.54 153.68 L842.54 148.79 L844.59 143.9 L846.68 139.01 L848.81 134.12 L850.97 129.22 L853.17 124.33 L855.4 119.44 L857.66 114.55 L859.95 109.66 L862.28 104.77 L864.62 99.88 L867 94.98 L869.4 90.09 L871.82 85.2 L874.26 80.31 L876.72 75.42 L879.2 70.53 L881.69 65.63 L884.2 60.74 L886.72 55.85 L889.25 50.96 L891.79 46.07 L894.34 41.18 L896.89 36.28 L899.44 31.39 L902 26.5"/>
<path d="M902 613.5 L898.17 608.61 L894.33 603.72 L890.51 598.83 L886.69 593.93 L882.88 589.04 L879.08 584.15 L875.3 579.26 L871.54 574.37 L867.8 569.48 L864.08 564.58 L860.39 559.69 L856.73 554.8 L853.1 549.91 L849.5 545.02 L845.94 540.12 L842.41 535.23 L838.93 530.34 L835.49 525.45 L832.1 520.56 L828.75 515.67 L825.45 510.77 L822.21 505.88 L819.02 500.99 L815.89 496.1 L812.82 491.21 L809.8 486.32 L806.86 481.43 L803.97 476.53 L801.16 471.64 L798.41 466.75 L795.73 461.86 L793.13 456.97 L790.6 452.07 L788.15 447.18 L785.77 442.29 L783.48 437.4 L781.27 432.51 L779.13 427.62 L777.09 422.73 L775.13 417.83 L773.25 412.94 L771.47 408.05 L769.77 403.16 L768.17 398.27 L766.65 393.38 L765.23 388.48 L763.9 383.59 L762.67 378.7 L761.53 373.81 L760.49 368.92 L759.55 364.02 L758.7 359.13 L757.95 354.24 L757.3 349.35 L756.75 344.46 L756.3 339.57 L755.95 334.68 L755.7 329.78 L755.55 324.89 L755.5 320 L755.55 315.11 L755.7 310.22 L755.95 305.32 L756.3 300.43 L756.75 295.54 L757.3 290.65 L757.95 285.76 L758.7 280.87 L759.55 275.98 L760.49 271.08 L761.53 266.19 L762.67 261.3 L763.9 256.41 L765.23 251.52 L766.65 246.62 L768.17 241.73 L769.77 236.84 L771.47 231.95 L773.25 227.06 L775.13 222.17 L777.09 217.28 L779.13 212.38 L781.27 207.49 L783.48 202.6 L785.77 197.71 L788.15 192.82 L790.6 187.93 L793.13 183.03 L795.73 178.14 L798.41 173.25 L801.16 168.36 L803.97 163.47 L806.86 158.57 L809.8 153.68 L812.82 148.79 L815.89 143.9 L819.02 139.01 L822.21 134.12 L825.45 129.22 L828.75 124.33 L832.1 119.44 L835.49 114.55 L838.93 109.66 L842.41 104.77 L845.94 99.88 L849.5 94.98 L853.1 90.09 L856.73 85.2 L860.39 80.31 L864.08 75.42 L867.8 70.53 L871.54 65.63 L875.3 60.74 L879.08 55.85 L882.88 50.96 L886.69 46.07 L890.51 41.18 L894.33 36.28 L898.17 31.39 L902 26.5"/>
<path d="M902 613.5 L896.89 608.61 L891.78 603.72 L886.67 598.83 L881.58 593.93 L876.5 589.04 L871.44 584.15 L866.4 579.26 L861.39 574.37 L856.4 569.48 L851.44 564.58 L846.52 559.69 L841.64 554.8 L836.8 549.91 L832 545.02 L827.25 540.12 L822.55 535.23 L817.91 530.34 L813.32 525.45 L808.79 520.56 L804.33 515.67 L799.94 510.77 L795.61 505.88 L791.36 500.99 L787.19 496.1 L783.09 491.21 L779.07 486.32 L775.14 481.43 L771.3 476.53 L767.54 471.64 L763.88 466.75 L760.31 461.86 L756.84 456.97 L753.47 452.07 L750.2 447.18 L747.03 442.29 L743.97 437.4 L741.02 432.51 L738.18 427.62 L735.45 422.73 L732.84 417.83 L730.34 412.94 L727.96 408.05 L725.7 403.16 L723.55 398.27 L721.54 393.38 L719.64 388.48 L717.87 383.59 L716.23 378.7 L714.71 373.81 L713.32 368.92 L712.06 364.02 L710.94 359.13 L709.94 354.24 L709.07 349.35 L708.34 344.46 L707.74 339.57 L707.27 334.68 L706.93 329.78 L706.73 324.89 L706.67 320 L706.73 315.11 L706.93 310.22 L707.27 305.32 L707.74 300.43 L708.34 295.54 L709.07 290.65 L709.94 285.76 L710.94 280.87 L712.06 275.98 L713.32 271.08 L714.71 266.19 L716.23 261.3 L717.87 256.41 L719.64 251.52 L721.54 246.62 L723.55 241.73 L725.7 236.84 L727.96 231.95 L730.34 227.06 L732.84 222.17 L735.45 217.28 L738.18 212.38 L741.02 207.49 L743.97 202.6 L747.03 197.71 L750.2 192.82 L753.47 187.93 L756.84 183.03 L760.31 178.14 L763.88 173.25 L767.54 168.36 L771.3 163.47 L775.14 158.57 L779.07 153.68 L783.09 148.79 L787.19 143.9 L791.36 139.01 L795.61 134.12 L799.94 129.22 L804.33 124.33 L808.79 119.44 L813.32 114.55 L817.91 109.66 L822.55 104.77 L827.25 99.88 L832 94.98 L836.8 90.09 L841.64 85.2 L846.52 80.31 L851.44 75.42 L856.4 70.53 L861.39 65.63 L866.4 60.74 L871.44 55.85 L876.5 50.96 L881.58 46.07 L886.67 41.18 L891.78 36.28 L896.89 31.39 L902 26.5"/>
<path d="M902 613.5 L895.61 608.61 L889.22 603.72 L882.84 598.83 L876.48 593.93 L870.13 589.04 L863.8 584.15 L857.5 579.26 L851.23 574.37 L845 569.48 L838.81 564.58 L832.65 559.69 L826.55 554.8 L820.5 549.91 L814.5 545.02 L808.56 540.12 L802.69 535.23 L796.88 530.34 L791.15 525.45 L785.49 520.56 L779.92 515.67 L774.42 510.77 L769.02 505.88 L763.7 500.99 L758.48 496.1 L753.36 491.21 L748.34 486.32 L743.43 481.43 L738.62 476.53 L733.93 471.64 L729.35 466.75 L724.89 461.86 L720.55 456.97 L716.33 452.07 L712.25 447.18 L708.29 442.29 L704.47 437.4 L700.78 432.51 L697.22 427.62 L693.81 422.73 L690.55 417.83 L687.42 412.94 L684.45 408.05 L681.62 403.16 L678.94 398.27 L676.42 393.38 L674.05 388.48 L671.84 383.59 L669.78 378.7 L667.89 373.81 L666.15 368.92 L664.58 364.02 L663.17 359.13 L661.92 354.24 L660.84 349.35 L659.92 344.46 L659.17 339.57 L658.59 334.68 L658.17 329.78 L657.92 324.89 L657.83 320 L657.92 315.11 L658.17 310.22 L658.59 305.32 L659.17 300.43 L659.92 295.54 L660.84 290.65 L661.92 285.76 L663.17 280.87 L664.58 275.98 L666.15 271.08 L667.89 266.19 L669.78 261.3 L671.84 256.41 L674.05 251.52 L676.42 246.62 L678.94 241.73 L681.62 236.84 L684.45 231.95 L687.42 227.06 L690.55 222.17 L693.81 217.28 L697.22 212.38 L700.78 207.49 L704.47 202.6 L708.29 197.71 L712.25 192.82 L716.33 187.93 L720.55 183.03 L724.89 178.14 L729.35 173.25 L733.93 168.36 L738.62 163.47 L743.43 158.57 L748.34 153.68 L753.36 148.79 L758.48 143.9 L763.7 139.01 L769.02 134.12 L774.42 129.22 L779.92 124.33 L785.49 119.44 L791.15 114.55 L796.88 109.66 L802.69 104.77 L808.56 99.88 L814.5 94.98 L820.5 90.09 L826.55 85.2 L832.65 80.31 L838.81 75.42 L845 70.53 L851.23 65.63 L857.5 60.74 L863.8 55.85 L870.13 50.96 L876.48 46.07 L882.84 41.18 L889.22 36.28 L895.61 31.39 L902 26.5"/>
<path d="M902 613.5 L894.33 608.61 L886.67 603.72 L879.01 598.83 L871.37 593.93 L863.76 589.04 L856.16 584.15 L848.6 579.26 L841.08 574.37 L833.6 569.48 L826.17 564.58 L818.78 559.69 L811.46 554.8 L804.19 549.91 L797 545.02 L789.87 540.12 L782.83 535.23 L775.86 530.34 L768.98 525.45 L762.19 520.56 L755.5 515.67 L748.91 510.77 L742.42 505.88 L736.04 500.99 L729.78 496.1 L723.63 491.21 L717.61 486.32 L711.71 481.43 L705.94 476.53 L700.31 471.64 L694.82 466.75 L689.47 461.86 L684.26 456.97 L679.2 452.07 L674.3 447.18 L669.55 442.29 L664.96 437.4 L660.53 432.51 L656.27 427.62 L652.18 422.73 L648.25 417.83 L644.51 412.94 L640.94 408.05 L637.54 403.16 L634.33 398.27 L631.3 393.38 L628.46 388.48 L625.81 383.59 L623.34 378.7 L621.07 373.81 L618.98 368.92 L617.1 364.02 L615.4 359.13 L613.91 354.24 L612.61 349.35 L611.51 344.46 L610.61 339.57 L609.9 334.68 L609.4 329.78 L609.1 324.89 L609 320 L609.1 315.11 L609.4 310.22 L609.9 305.32 L610.61 300.43 L611.51 295.54 L612.61 290.65 L613.91 285.76 L615.4 280.87 L617.1 275.98 L618.98 271.08 L621.07 266.19 L623.34 261.3 L625.81 256.41 L628.46 251.52 L631.3 246.62 L634.33 241.73 L637.54 236.84 L640.94 231.95 L644.51 227.06 L648.25 222.17 L652.18 217.28 L656.27 212.38 L660.53 207.49 L664.96 202.6 L669.55 197.71 L674.3 192.82 L679.2 187.93 L684.26 183.03 L689.47 178.14 L694.82 173.25 L700.31 168.36 L705.94 163.47 L711.71 158.57 L717.61 153.68 L723.63 148.79 L729.78 143.9 L736.04 139.01 L742.42 134.12 L748.91 129.22 L755.5 124.33 L762.19 119.44 L768.98 114.55 L775.86 109.66 L782.83 104.77 L789.87 99.88 L797 94.98 L804.19 90.09 L811.46 85.2 L818.78 80.31 L826.17 75.42 L833.6 70.53 L841.08 65.63 L848.6 60.74 L856.16 55.85 L863.76 50.96 L871.37 46.07 L879.01 41.18 L886.67 36.28 L894.33 31.39 L902 26.5"/>
<path d="M902 613.5 L893.05 608.61 L884.11 603.72 L875.18 598.83 L866.27 593.93 L857.38 589.04 L848.53 584.15 L839.71 579.26 L830.93 574.37 L822.2 569.48 L813.53 564.58 L804.91 559.69 L796.37 554.8 L787.89 549.91 L779.5 545.02 L771.19 540.12 L762.96 535.23 L754.84 530.34 L746.81 525.45 L738.89 520.56 L731.08 515.67 L723.39 510.77 L715.82 505.88 L708.38 500.99 L701.08 496.1 L693.91 491.21 L686.88 486.32 L680 481.43 L673.27 476.53 L666.7 471.64 L660.29 466.75 L654.04 461.86 L647.97 456.97 L642.07 452.07 L636.35 447.18 L630.81 442.29 L625.45 437.4 L620.29 432.51 L615.31 427.62 L610.54 422.73 L605.96 417.83 L601.59 412.94 L597.42 408.05 L593.47 403.16 L589.72 398.27 L586.19 393.38 L582.87 388.48 L579.77 383.59 L576.9 378.7 L574.24 373.81 L571.81 368.92 L569.61 364.02 L567.64 359.13 L565.89 354.24 L564.38 349.35 L563.09 344.46 L562.04 339.57 L561.22 334.68 L560.64 329.78 L560.28 324.89 L560.17 320 L560.28 315.11 L560.64 310.22 L561.22 305.32 L562.04 300.43 L563.09 295.54 L564.38 290.65 L565.89 285.76 L567.64 280.87 L569.61 275.98 L571.81 271.08 L574.24 266.19 L576.9 261.3 L579.77 256.41 L582.87 251.52 L586.19 246.62 L589.72 241.73 L593.47 236.84 L597.42 231.95 L601.59 227.06 L605.96 222.17 L610.54 217.28 L615.31 212.38 L620.29 207.49 L625.45 202.6 L630.81 197.71 L636.35 192.82 L642.07 187.93 L647.97 183.03 L654.04 178.14 L660.29 173.25 L666.7 168.36 L673.27 163.47 L680 158.57 L686.88 153.68 L693.91 148.79 L701.08 143.9 L708.38 139.01 L715.82 134.12 L723.39 129.22 L731.08 124.33 L738.89 119.44 L746.81 114.55 L754.84 109.66 L762.96 104.77 L771.19 99.88 L779.5 94.98 L787.89 90.09 L796.37 85.2 L804.91 80.31 L813.53 75.42 L822.2 70.53 L830.93 65.63 L839.71 60.74 L848.53 55.85 L857.38 50.96 L866.27 46.07 L875.18 41.18 L884.11 36.28 L893.05 31.39 L902 26.5"/>
<path d="M902 613.5 L891.77 608.61 L881.55 603.72 L871.35 598.83 L861.16 593.93 L851.01 589.04 L840.89 584.15 L830.81 579.26 L820.78 574.37 L810.8 569.48 L800.89 564.58 L791.04 559.69 L781.28 554.8 L771.59 549.91 L762 545.02 L752.5 540.12 L743.1 535.23 L733.81 530.34 L724.64 525.45 L715.59 520.56 L706.67 515.67 L697.88 510.77 L689.23 505.88 L680.72 500.99 L672.37 496.1 L664.18 491.21 L656.15 486.32 L648.28 481.43 L640.59 476.53 L633.08 471.64 L625.76 466.75 L618.62 461.86 L611.68 456.97 L604.93 452.07 L598.39 447.18 L592.06 442.29 L585.94 437.4 L580.04 432.51 L574.36 427.62 L568.9 422.73 L563.67 417.83 L558.68 412.94 L553.91 408.05 L549.39 403.16 L545.11 398.27 L541.07 393.38 L537.28 388.48 L533.74 383.59 L530.45 378.7 L527.42 373.81 L524.64 368.92 L522.13 364.02 L519.87 359.13 L517.88 354.24 L516.14 349.35 L514.68 344.46 L513.47 339.57 L512.54 334.68 L511.87 329.78 L511.47 324.89 L511.33 320 L511.47 315.11 L511.87 310.22 L512.54 305.32 L513.47 300.43 L514.68 295.54 L516.14 290.65 L517.88 285.76 L519.87 280.87 L522.13 275.98 L524.64 271.08 L527.42 266.19 L530.45 261.3 L533.74 256.41 L537.28 251.52 L541.07 246.62 L545.11 241.73 L549.39 236.84 L553.91 231.95 L558.68 227.06 L563.67 222.17 L568.9 217.28 L574.36 212.38 L580.04 207.49 L585.94 202.6 L592.06 197.71 L598.39 192.82 L604.93 187.93 L611.68 183.03 L618.62 178.14 L625.76 173.25 L633.08 168.36 L640.59 163.47 L648.28 158.57 L656.15 153.68 L664.18 148.79 L672.37 143.9 L680.72 139.01 L689.23 134.12 L697.88 129.22 L706.67 124.33 L715.59 119.44 L724.64 114.55 L733.81 109.66 L743.1 104.77 L752.5 99.88 L762 94.98 L771.59 90.09 L781.28 85.2 L791.04 80.31 L800.89 75.42 L810.8 70.53 L820.78 65.63 L830.81 60.74 L840.89 55.85 L851.01 50.96 L861.16 46.07 L871.35 41.18 L881.55 36.28 L891.77 31.39 L902 26.5"/>
<path d="M902 613.5 L890.5 608.61 L879 603.72 L867.52 598.83 L856.06 593.93 L844.63 589.04 L833.25 584.15 L821.91 579.26 L810.62 574.37 L799.4 569.48 L788.25 564.58 L777.18 559.69 L766.19 554.8 L755.29 549.91 L744.5 545.02 L733.81 540.12 L723.24 535.23 L712.79 530.34 L702.47 525.45 L692.29 520.56 L682.25 515.67 L672.36 510.77 L662.63 505.88 L653.06 500.99 L643.67 496.1 L634.45 491.21 L625.41 486.32 L616.57 481.43 L607.92 476.53 L599.47 471.64 L591.23 466.75 L583.2 461.86 L575.39 456.97 L567.8 452.07 L560.44 447.18 L553.32 442.29 L546.44 437.4 L539.8 432.51 L533.4 427.62 L527.26 422.73 L521.38 417.83 L515.76 412.94 L510.4 408.05 L505.31 403.16 L500.5 398.27 L495.95 393.38 L491.69 388.48 L487.71 383.59 L484.01 378.7 L480.6 373.81 L477.48 368.92 L474.64 364.02 L472.1 359.13 L469.86 354.24 L467.91 349.35 L466.26 344.46 L464.91 339.57 L463.85 334.68 L463.1 329.78 L462.65 324.89 L462.5 320 L462.65 315.11 L463.1 310.22 L463.85 305.32 L464.91 300.43 L466.26 295.54 L467.91 290.65 L469.86 285.76 L472.1 280.87 L474.64 275.98 L477.48 271.08 L480.6 266.19 L484.01 261.3 L487.71 256.41 L491.69 251.52 L495.95 246.62 L500.5 241.73 L505.31 236.84 L510.4 231.95 L515.76 227.06 L521.38 222.17 L527.26 217.28 L533.4 212.38 L539.8 207.49 L546.44 202.6 L553.32 197.71 L560.44 192.82 L567.8 187.93 L575.39 183.03 L583.2 178.14 L591.23 173.25 L599.47 168.36 L607.92 163.47 L616.57 158.57 L625.41 153.68 L634.45 148.79 L643.67 143.9 L653.06 139.01 L662.63 134.12 L672.36 129.22 L682.25 124.33 L692.29 119.44 L702.47 114.55 L712.79 109.66 L723.24 104.77 L733.81 99.88 L744.5 94.98 L755.29 90.09 L766.19 85.2 L777.18 80.31 L788.25 75.42 L799.4 70.53 L810.62 65.63 L821.91 60.74 L833.25 55.85 L844.63 50.96 L856.06 46.07 L867.52 41.18 L879 36.28 L890.5 31.39 L902 26.5"/>
<path d="M902 613.5 L889.22 608.61 L876.44 603.72 L863.69 598.83 L850.96 593.93 L838.26 589.04 L825.61 584.15 L813.01 579.26 L800.47 574.37 L788 569.48 L775.61 564.58 L763.31 559.69 L751.1 554.8 L738.99 549.91 L727 545.02 L715.12 540.12 L703.38 535.23 L691.77 530.34 L680.3 525.45 L668.99 520.56 L657.83 515.67 L646.85 510.77 L636.03 505.88 L625.4 500.99 L614.96 496.1 L604.72 491.21 L594.68 486.32 L584.85 481.43 L575.24 476.53 L565.85 471.64 L556.7 466.75 L547.78 461.86 L539.1 456.97 L530.67 452.07 L522.49 447.18 L514.58 442.29 L506.93 437.4 L499.55 432.51 L492.45 427.62 L485.63 422.73 L479.09 417.83 L472.84 412.94 L466.89 408.05 L461.24 403.16 L455.89 398.27 L450.84 393.38 L446.1 388.48 L441.68 383.59 L437.57 378.7 L433.78 373.81 L430.31 368.92 L427.16 364.02 L424.34 359.13 L421.84 354.24 L419.68 349.35 L417.84 344.46 L416.34 339.57 L415.17 334.68 L414.34 329.78 L413.83 324.89 L413.67 320 L413.83 315.11 L414.34 310.22 L415.17 305.32 L416.34 300.43 L417.84 295.54 L419.68 290.65 L421.84 285.76 L424.34 280.87 L427.16 275.98 L430.31 271.08 L433.78 266.19 L437.57 261.3 L441.68 256.41 L446.1 251.52 L450.84 246.62 L455.89 241.73 L461.24 236.84 L466.89 231.95 L472.84 227.06 L479.09 222.17 L485.63 217.28 L492.45 212.38 L499.55 207.49 L506.93 202.6 L514.58 197.71 L522.49 192.82 L530.67 187.93 L539.1 183.03 L547.78 178.14 L556.7 173.25 L565.85 168.36 L575.24 163.47 L584.85 158.57 L594.68 153.68 L604.72 148.79 L614.96 143.9 L625.4 139.01 L636.03 134.12 L646.85 129.22 L657.83 124.33 L668.99 119.44 L680.3 114.55 L691.77 109.66 L703.38 104.77 L715.12 99.88 L727 94.98 L738.99 90.09 L751.1 85.2 L763.31 80.31 L775.61 75.42 L788 70.53 L800.47 65.63 L813.01 60.74 L825.61 55.85 L838.26 50.96 L850.96 46.07 L863.69 41.18 L876.44 36.28 L889.22 31.39 L902 26.5"/>
<path d="M902 613.5 L887.94 608.61 L873.89 603.72 L859.85 598.83 L845.85 593.93 L831.89 589.04 L817.97 584.15 L804.11 579.26 L790.32 574.37 L776.6 569.48 L762.97 564.58 L749.44 559.69 L736.01 554.8 L722.69 549.91 L709.5 545.02 L696.44 540.12 L683.51 535.23 L670.74 530.34 L658.13 525.45 L645.69 520.56 L633.42 515.67 L621.33 510.77 L609.44 505.88 L597.75 500.99 L586.26 496.1 L574.99 491.21 L563.95 486.32 L553.14 481.43 L542.57 476.53 L532.24 471.64 L522.17 466.75 L512.35 461.86 L502.81 456.97 L493.54 452.07 L484.54 447.18 L475.84 442.29 L467.42 437.4 L459.31 432.51 L451.49 427.62 L443.99 422.73 L436.8 417.83 L429.93 412.94 L423.38 408.05 L417.16 403.16 L411.27 398.27 L405.72 393.38 L400.51 388.48 L395.64 383.59 L391.12 378.7 L386.95 373.81 L383.14 368.92 L379.68 364.02 L376.57 359.13 L373.83 354.24 L371.45 349.35 L369.43 344.46 L367.78 339.57 L366.49 334.68 L365.57 329.78 L365.02 324.89 L364.83 320 L365.02 315.11 L365.57 310.22 L366.49 305.32 L367.78 300.43 L369.43 295.54 L371.45 290.65 L373.83 285.76 L376.57 280.87 L379.68 275.98 L383.14 271.08 L386.95 266.19 L391.12 261.3 L395.64 256.41 L400.51 251.52 L405.72 246.62 L411.27 241.73 L417.16 236.84 L423.38 231.95 L429.93 227.06 L436.8 222.17 L443.99 217.28 L451.49 212.38 L459.31 207.49 L467.42 202.6 L475.84 197.71 L484.54 192.82 L493.54 187.93 L502.81 183.03 L512.35 178.14 L522.17 173.25 L532.24 168.36 L542.57 163.47 L553.14 158.57 L563.95 153.68 L574.99 148.79 L586.26 143.9 L597.75 139.01 L609.44 134.12 L621.33 129.22 L633.42 124.33 L645.69 119.44 L658.13 114.55 L670.74 109.66 L683.51 104.77 L696.44 99.88 L709.5 94.98 L722.69 90.09 L736.01 85.2 L749.44 80.31 L762.97 75.42 L776.6 70.53 L790.32 65.63 L804.11 60.74 L817.97 55.85 L831.89 50.96 L845.85 46.07 L859.85 41.18 L873.89 36.28 L887.94 31.39 L902 26.5"/>
<path d="M902 613.5 L886.66 608.61 L871.33 603.72 L856.02 598.83 L840.75 593.93 L825.51 589.04 L810.33 584.15 L795.21 579.26 L780.16 574.37 L765.2 569.48 L750.33 564.58 L735.57 559.69 L720.92 554.8 L706.39 549.91 L692 545.02 L677.75 540.12 L663.65 535.23 L649.72 530.34 L635.96 525.45 L622.38 520.56 L609 515.67 L595.82 510.77 L582.84 505.88 L570.09 500.99 L557.56 496.1 L545.27 491.21 L533.22 486.32 L521.42 481.43 L509.89 476.53 L498.62 471.64 L487.64 466.75 L476.93 461.86 L466.52 456.97 L456.4 452.07 L446.59 447.18 L437.09 442.29 L427.92 437.4 L419.06 432.51 L410.54 427.62 L402.35 422.73 L394.51 417.83 L387.01 412.94 L379.87 408.05 L373.09 403.16 L366.66 398.27 L360.61 393.38 L354.92 388.48 L349.61 383.59 L344.68 378.7 L340.13 373.81 L335.97 368.92 L332.19 364.02 L328.81 359.13 L325.81 354.24 L323.21 349.35 L321.01 344.46 L319.21 339.57 L317.81 334.68 L316.8 329.78 L316.2 324.89 L316 320 L316.2 315.11 L316.8 310.22 L317.81 305.32 L319.21 300.43 L321.01 295.54 L323.21 290.65 L325.81 285.76 L328.81 280.87 L332.19 275.98 L335.97 271.08 L340.13 266.19 L344.68 261.3 L349.61 256.41 L354.92 251.52 L360.61 246.62 L366.66 241.73 L373.09 236.84 L379.87 231.95 L387.01 227.06 L394.51 222.17 L402.35 217.28 L410.54 212.38 L419.06 207.49 L427.92 202.6 L437.09 197.71 L446.59 192.82 L456.4 187.93 L466.52 183.03 L476.93 178.14 L487.64 173.25 L498.62 168.36 L509.89 163.47 L521.42 158.57 L533.22 153.68 L545.27 148.79 L557.56 143.9 L570.09 139.01 L582.84 134.12 L595.82 129.22 L609 124.33 L622.38 119.44 L635.96 114.55 L649.72 109.66 L663.65 104.77 L677.75 99.88 L692 94.98 L706.39 90.09 L720.92 85.2 L735.57 80.31 L750.33 75.42 L765.2 70.53 L780.16 65.63 L795.21 60.74 L810.33 55.85 L825.51 50.96 L840.75 46.07 L856.02 41.18 L871.33 36.28 L886.66 31.39 L902 26.5"/>
</g>
<g fill="none" stroke="#5c5c5c" stroke-width="1.25" stroke-dasharray="1.25 2.06">
<path d="M1154 183 L1190 183.6 L1240 191 L1300 205 L1350 222 L1410 244 L1462 265"/>
<path d="M341 271 L353 292 L375.5 318 L398 338 L440 364 L487 390 L520 402 L538 410"/>
<path d="M612 352 L600 380 L592 404 L589 436 L588 460 L580 478 L572 484"/>
<path d="M767 72 L717 90 L663 112 L620 134 L560 165 L513 187 L484 212 L455 235 L441 246 L429 258 L419 269 L412 287 L409 319 L414 346 L428 374 L454 405.5 L479 416"/>
</g>
<g font-family="Liberation Sans, sans-serif" font-size="11" fill="#808080">
<text x="1472.1" y="330" textLength="27.19" lengthAdjust="spacingAndGlyphs">+180</text>
<text x="1500.9" y="327.4" font-size="6.5">°</text>
<text x="1374.44" y="330" textLength="27.19" lengthAdjust="spacingAndGlyphs">+210</text>
<text x="1403.23" y="327.4" font-size="6.5">°</text>
<text x="1276.77" y="330" textLength="27.19" lengthAdjust="spacingAndGlyphs">+240</text>
<text x="1305.56" y="327.4" font-size="6.5">°</text>
<text x="1179.1" y="330" textLength="27.19" lengthAdjust="spacingAndGlyphs">+270</text>
<text x="1207.9" y="327.4" font-size="6.5">°</text>
<text x="1081.44" y="330" textLength="27.19" lengthAdjust="spacingAndGlyphs">+300</text>
<text x="1110.23" y="327.4" font-size="6.5">°</text>
<text x="983.77" y="330" textLength="27.19" lengthAdjust="spacingAndGlyphs">+330</text>
<text x="1012.56" y="327.4" font-size="6.5">°</text>
<text x="892.4" y="330" textLength="14.59" lengthAdjust="spacingAndGlyphs">+0</text>
<text x="908.6" y="327.4" font-size="6.5">°</text>
<text x="791.59" y="330" textLength="20.89" lengthAdjust="spacingAndGlyphs">+30</text>
<text x="814.08" y="327.4" font-size="6.5">°</text>
<text x="693.92" y="330" textLength="20.89" lengthAdjust="spacingAndGlyphs">+60</text>
<text x="716.41" y="327.4" font-size="6.5">°</text>
<text x="596.25" y="330" textLength="20.89" lengthAdjust="spacingAndGlyphs">+90</text>
<text x="618.75" y="327.4" font-size="6.5">°</text>
<text x="495.44" y="330" textLength="27.19" lengthAdjust="spacingAndGlyphs">+120</text>
<text x="524.23" y="327.4" font-size="6.5">°</text>
<text x="397.77" y="330" textLength="27.19" lengthAdjust="spacingAndGlyphs">+150</text>
<text x="426.56" y="327.4" font-size="6.5">°</text>
<text x="300.1" y="330" textLength="27.19" lengthAdjust="spacingAndGlyphs">+180</text>
<text x="328.9" y="327.4" font-size="6.5">°</text>
<text x="889.25" y="24.8" textLength="20.89" lengthAdjust="spacingAndGlyphs">+90</text>
<text x="911.75" y="22.2" font-size="6.5">°</text>
<text x="889.25" y="122.63" textLength="20.89" lengthAdjust="spacingAndGlyphs">+60</text>
<text x="911.75" y="120.03" font-size="6.5">°</text>
<text x="889.25" y="220.47" textLength="20.89" lengthAdjust="spacingAndGlyphs">+30</text>
<text x="911.75" y="217.87" font-size="6.5">°</text>
<text x="889.25" y="427.73" textLength="20.89" lengthAdjust="spacingAndGlyphs">−30</text>
<text x="911.75" y="425.13" font-size="6.5">°</text>
<text x="889.25" y="525.57" textLength="20.89" lengthAdjust="spacingAndGlyphs">−60</text>
<text x="911.75" y="522.97" font-size="6.5">°</text>
<text x="889.25" y="623.4" textLength="20.89" lengthAdjust="spacingAndGlyphs">−90</text>
<text x="911.75" y="620.8" font-size="6.5">°</text>
</g>
<path d="M494.86 194.45 L493.53 194.48 L492.08 194.59 L490.51 194.77 L488.83 195.03 L487.04 195.35 L485.15 195.74 L483.16 196.2 L481.09 196.73 L478.94 197.32 L476.71 197.97 L474.42 198.69 L472.08 199.46 L469.69 200.29 L467.27 201.16 L464.81 202.09 L462.34 203.07 L459.86 204.08 L457.38 205.14 L454.9 206.24 L452.45 207.36 L450.02 208.52 L447.63 209.7 L445.28 210.91 L442.98 212.13 L440.75 213.37 L438.57 214.63 L436.47 215.89 L434.45 217.16 L432.52 218.42 L430.67 219.69 L428.92 220.95 L427.26 222.21 L425.71 223.45 L424.27 224.67 L422.94 225.88 L421.71 227.07 L420.6 228.23 L419.61 229.37 L418.73 230.48 L417.97 231.55 L417.32 232.59 L416.79 233.59 L416.38 234.55 L416.08 235.47 L415.9 236.35 L415.83 237.18 L415.87 237.96 L416.02 238.69 L416.27 239.37 L416.63 239.99 L417.09 240.56 L417.64 241.08 L418.3 241.53 L419.04 241.93 L419.88 242.27 L420.8 242.54 L421.8 242.76 L422.88 242.91 L424.04 243.01 L425.27 243.04 L426.57 243.01 L427.94 242.91 L429.37 242.76 L430.86 242.54 L432.4 242.27 L434 241.93 L435.64 241.53 L437.33 241.08 L439.06 240.56 L440.83 239.99 L442.64 239.37 L444.48 238.69 L446.35 237.96 L448.25 237.18 L450.16 236.35 L452.1 235.47 L454.05 234.55 L456.02 233.59 L457.99 232.59 L459.97 231.55 L461.95 230.48 L463.93 229.37 L465.9 228.23 L467.87 227.07 L469.82 225.88 L471.75 224.67 L473.66 223.45 L475.55 222.21 L477.41 220.95 L479.23 219.69 L481.01 218.42 L482.74 217.16 L484.43 215.89 L486.07 214.63 L487.64 213.37 L489.16 212.13 L490.6 210.91 L491.97 209.7 L493.26 208.52 L494.47 207.36 L495.59 206.24 L496.62 205.14 L497.55 204.08 L498.37 203.07 L499.09 202.09 L499.7 201.16 L500.18 200.29 L500.56 199.46 L500.8 198.69 L500.92 197.97 L500.92 197.32 L500.78 196.73 L500.51 196.2 L500.1 195.74 L499.56 195.35 L498.89 195.03 L498.08 194.77 L497.13 194.59 L496.06 194.48Z" fill="none" stroke="#52c468" stroke-width="2.2"/>
<path d="M467.19 296.1 L465.95 296.13 L464.69 296.23 L463.42 296.39 L462.14 296.62 L460.86 296.91 L459.57 297.26 L458.29 297.67 L457.02 298.15 L455.76 298.69 L454.52 299.28 L453.3 299.93 L452.11 300.63 L450.95 301.39 L449.83 302.19 L448.74 303.04 L447.71 303.94 L446.72 304.89 L445.78 305.87 L444.91 306.89 L444.09 307.94 L443.34 309.03 L442.66 310.15 L442.06 311.29 L441.52 312.45 L441.07 313.64 L440.69 314.84 L440.39 316.05 L440.18 317.28 L440.05 318.51 L440 319.74 L440.04 320.98 L440.16 322.21 L440.37 323.43 L440.66 324.64 L441.03 325.85 L441.48 327.03 L442 328.19 L442.6 329.34 L443.27 330.45 L444.02 331.54 L444.82 332.59 L445.69 333.61 L446.62 334.6 L447.6 335.54 L448.63 336.44 L449.71 337.29 L450.83 338.09 L451.99 338.85 L453.17 339.55 L454.39 340.2 L455.63 340.79 L456.88 341.33 L458.15 341.8 L459.43 342.22 L460.71 342.57 L461.99 342.86 L463.27 343.09 L464.54 343.25 L465.79 343.35 L467.04 343.38 L468.26 343.35 L469.46 343.25 L470.63 343.09 L471.78 342.86 L472.9 342.57 L473.98 342.22 L475.03 341.8 L476.04 341.33 L477.01 340.79 L477.94 340.2 L478.84 339.55 L479.69 338.85 L480.49 338.09 L481.25 337.29 L481.97 336.44 L482.64 335.54 L483.27 334.6 L483.85 333.61 L484.38 332.59 L484.87 331.54 L485.31 330.45 L485.71 329.34 L486.06 328.19 L486.36 327.03 L486.62 325.85 L486.83 324.64 L486.99 323.43 L487.11 322.21 L487.18 320.98 L487.21 319.74 L487.19 318.51 L487.13 317.28 L487.02 316.05 L486.86 314.84 L486.66 313.64 L486.41 312.45 L486.11 311.29 L485.77 310.15 L485.38 309.03 L484.95 307.94 L484.47 306.89 L483.94 305.87 L483.36 304.89 L482.74 303.94 L482.08 303.04 L481.37 302.19 L480.61 301.39 L479.81 300.63 L478.97 299.93 L478.08 299.28 L477.15 298.69 L476.18 298.15 L475.17 297.67 L474.13 297.26 L473.04 296.91 L471.93 296.62 L470.79 296.39 L469.61 296.23 L468.41 296.13Z" fill="none" stroke="#25858e" stroke-width="2.2"/>
<path d="M456 221 L456.7 231.7 L456.9 248.3 L459.5 265 L463 277 L468.3 286.7 L478 306 L488.3 322 L498 330 L507 334.4" fill="none" stroke="#52c468" stroke-width="1.4" stroke-dasharray="1.4 2.3"/>
<path d="M454 221 L450.8 231.7 L447.7 248.3 L448.3 265 L452.5 284 L460 302 L470 318 L483 335 L500 349.5 L518 362" fill="none" stroke="#52c468" stroke-width="1.4" stroke-dasharray="1.4 2.3"/>
<path d="M462.4 324.4 L515 340.5 L560 354 L608 367" fill="none" stroke="#25858e" stroke-width="1.4" stroke-dasharray="1.4 2.3"/>
<path d="M507 334.4 L515 341.6" fill="none" stroke="#52c468" stroke-width="1.6"/>
<path d="M518 362 L544 380" fill="none" stroke="#52c468" stroke-width="1.6"/>
<path d="M608 367 L618 369" fill="none" stroke="#25858e" stroke-width="1.6"/>
<path d="M612.4 351 L623 334.4" fill="none" stroke="#8c8c8c" stroke-width="1.4"/>
<path d="M538 410 L560 418" fill="none" stroke="#8c8c8c" stroke-width="1.4"/>
<path d="M479 415.6 L488 422" fill="none" stroke="#8c8c8c" stroke-width="1.4"/>
<rect x="513.8" y="340.4" width="2.4" height="2.4" fill="#f06a44"/>
<rect x="542.8" y="378.8" width="2.4" height="2.4" fill="#f06a44"/>
<rect x="616.8" y="367.8" width="2.4" height="2.4" fill="#f06a44"/>
<path d="M451.6 219.6 H458.4 M455 216.2 V223" stroke="#ff0000" stroke-width="1.6"/>
<path d="M459.1 324.5 H465.9 M462.5 321.1 V327.9" stroke="#ff0000" stroke-width="1.6"/>
<g font-family="Liberation Sans, sans-serif" font-size="11" fill="#ffffff" text-anchor="middle">
<text x="455.3" y="221.8" textLength="23.5" lengthAdjust="spacingAndGlyphs">COM</text>
<text x="463.4" y="323" textLength="21.8" lengthAdjust="spacingAndGlyphs">HYD</text>
</g>
<g font-family="Liberation Mono, monospace" font-size="13.9" fill="#ffffff">
<text x="315.5" y="29.8" xml:space="preserve">MX000B</text>
<text x="315.5" y="42.8" xml:space="preserve">Beg: 20251218 07:15:48 (sol = 266.26°)</text>
<text x="315.5" y="56.6" xml:space="preserve">End: 20251218 10:41:56 (sol = 266.40°)</text>
<text x="315.5" y="69.2" xml:space="preserve">--------------------------------------</text>
<text x="315.5" y="81.3" xml:space="preserve">...: 3</text>
<text x="315.5" y="94.6" xml:space="preserve">COM: 2</text>
<text x="315.5" y="107.8" xml:space="preserve">HYD: 1</text>
</g>
<g stroke="#505050" stroke-width="2.08" stroke-dasharray="2.08 3.44" stroke-dashoffset="0.46">
<path d="M74 641.5 V842.5"/>
<path d="M218 641.5 V842.5"/>
<path d="M365 641.5 V842.5"/>
<path d="M505.1 641.5 V842.5"/>
<path d="M650.1 641.5 V842.5"/>
<path d="M797.2 641.5 V842.5"/>
<path d="M939.8 641.5 V842.5"/>
<path d="M1091.1 641.5 V842.5"/>
<path d="M1239.5 641.5 V842.5"/>
<path d="M1393.8 641.5 V842.5"/>
<path d="M1547.9 641.5 V842.5"/>
<path d="M1687.2 641.5 V842.5"/>
</g>
<g font-family="Liberation Sans, sans-serif" font-size="30.5" fill="#4a4a4a" text-anchor="end">
<text transform="translate(149.3 643.7) rotate(-90)" textLength="52.61" lengthAdjust="spacingAndGlyphs">APR</text>
<text transform="translate(294 644.5) rotate(-90)" textLength="57.28" lengthAdjust="spacingAndGlyphs">MAY</text>
<text transform="translate(436.6 643) rotate(-90)" textLength="47.11" lengthAdjust="spacingAndGlyphs">JUN</text>
<text transform="translate(575.3 643) rotate(-90)" textLength="42.05" lengthAdjust="spacingAndGlyphs">JUL</text>
<text transform="translate(723.6 643) rotate(-90)" textLength="58.16" lengthAdjust="spacingAndGlyphs">AUG</text>
<text transform="translate(872 644) rotate(-90)" textLength="49.63" lengthAdjust="spacingAndGlyphs">SEP</text>
<text transform="translate(1016.7 644) rotate(-90)" textLength="55.64" lengthAdjust="spacingAndGlyphs">OCT</text>
<text transform="translate(1169.4 644) rotate(-90)" textLength="58.91" lengthAdjust="spacingAndGlyphs">NOV</text>
<text transform="translate(1319.4 644) rotate(-90)" textLength="55.75" lengthAdjust="spacingAndGlyphs">DEC</text>
<text transform="translate(1469.3 643) rotate(-90)" textLength="45.84" lengthAdjust="spacingAndGlyphs">JAN</text>
<text transform="translate(1628.2 647) rotate(-90)" textLength="50.25" lengthAdjust="spacingAndGlyphs">FEB</text>
<text transform="translate(1766 645.6) rotate(-90)" textLength="59.51" lengthAdjust="spacingAndGlyphs">MAR</text>
</g>
<g stroke="#c3e023" stroke-width="4.2">
<path d="M106 834 H129"/>
<path d="M165 834 H345"/>
<path d="M366 834 H625"/>
<path d="M635 834 H786"/>
<path d="M807 834 H899"/>
<path d="M920 834 H973"/>
<path d="M984 834 H1066"/>
<path d="M1082 834 H1203"/>
<path d="M1244 834 H1326"/>
<path d="M1337 834 H1355"/>
<path d="M1381 834 H1444"/>
<path d="M1459 834 H1512"/>
<path d="M1523 834 H1547"/>
<path d="M1724 834 H1748"/>
<path d="M1758 834 H1782"/>
</g>
<g stroke="#86d449" stroke-width="4.2">
<path d="M165 818 H188"/>
<path d="M223 818 H286"/>
<path d="M312 818 H340"/>
<path d="M366 818 H492"/>
<path d="M508 818 H654"/>
<path d="M704 818 H737"/>
<path d="M773 818 H845"/>
<path d="M871 818 H988"/>
<path d="M1003 818 H1017"/>
<path d="M1062 818 H1213"/>
<path d="M1244 818 H1267"/>
<path d="M1293 818 H1316"/>
<path d="M1342 818 H1365"/>
<path d="M1386 818 H1429"/>
<path d="M1459 818 H1483"/>
<path d="M1548 818 H1571"/>
</g>
<g stroke="#52c468" stroke-width="4.2">
<path d="M165 802 H188"/>
<path d="M258 802 H487"/>
<path d="M508 802 H615"/>
<path d="M626 802 H718"/>
<path d="M729 802 H826"/>
<path d="M949 802 H1149"/>
<path d="M1160 802 H1248"/>
<path d="M1258 802 H1444"/>
<path d="M1459 802 H1483"/>
<path d="M1552 802 H1576"/>
</g>
<g stroke="#2bb17e" stroke-width="4.2">
<path d="M194 785.5 H218"/>
<path d="M321 785.5 H507"/>
<path d="M518 785.5 H541"/>
<path d="M557 785.5 H683"/>
<path d="M807 785.5 H831"/>
<path d="M954 785.5 H973"/>
<path d="M988 785.5 H1125"/>
<path d="M1155 785.5 H1218"/>
<path d="M1244 785.5 H1267"/>
<path d="M1317 785.5 H1341"/>
<path d="M1396 785.5 H1419"/>
<path d="M1464 785.5 H1650"/>
</g>
<g stroke="#1e9b89" stroke-width="4.2">
<path d="M341 769 H370"/>
<path d="M410 769 H448"/>
<path d="M469 769 H492"/>
<path d="M527 769 H546"/>
<path d="M562 769 H590"/>
<path d="M616 769 H649"/>
<path d="M959 769 H988"/>
<path d="M1062 769 H1086"/>
<path d="M1101 769 H1125"/>
<path d="M1160 769 H1194"/>
<path d="M1248 769 H1272"/>
<path d="M1425 769 H1512"/>
</g>
<g stroke="#25858e" stroke-width="4.2">
<path d="M420 752.5 H443"/>
<path d="M532 752.5 H556"/>
<path d="M567 752.5 H590"/>
<path d="M621 752.5 H742"/>
<path d="M969 752.5 H1135"/>
<path d="M1185 752.5 H1346"/>
<path d="M1469 752.5 H1493"/>
</g>
<g stroke="#2e6f8e" stroke-width="4.2">
<path d="M429 736 H453"/>
<path d="M576 736 H733"/>
<path d="M993 736 H1105"/>
<path d="M1116 736 H1223"/>
<path d="M1263 736 H1292"/>
<path d="M1489 736 H1512"/>
</g>
<g stroke="#38588c" stroke-width="4.2">
<path d="M591 719.5 H615"/>
<path d="M655 719.5 H772"/>
<path d="M1072 719.5 H1243"/>
<path d="M1263 719.5 H1287"/>
</g>
<g stroke="#433e84" stroke-width="4.2">
<path d="M596 703 H733"/>
<path d="M1091 703 H1120"/>
<path d="M1199 703 H1223"/>
<path d="M1273 703 H1326"/>
</g>
<g stroke="#482172" stroke-width="4.2">
<path d="M1111 687 H1135"/>
</g>
<g font-family="Liberation Sans, sans-serif" font-size="10.42" fill="#f0f0f0" text-anchor="middle">
<text x="117.5" y="831.2" textLength="20.03" lengthAdjust="spacingAndGlyphs">KSE</text>
<text x="255" y="831.2" textLength="20.08" lengthAdjust="spacingAndGlyphs">ETA</text>
<text x="494.3" y="831.2" textLength="22.21" lengthAdjust="spacingAndGlyphs">NZC</text>
<text x="710.5" y="831.2" textLength="22.95" lengthAdjust="spacingAndGlyphs">NDA</text>
<text x="853" y="831.2" textLength="19.48" lengthAdjust="spacingAndGlyphs">SPE</text>
<text x="945.5" y="831.2" textLength="22.39" lengthAdjust="spacingAndGlyphs">ARD</text>
<text x="1025" y="831.2" textLength="21.24" lengthAdjust="spacingAndGlyphs">EGE</text>
<text x="1142.5" y="831.2" textLength="21.29" lengthAdjust="spacingAndGlyphs">NTA</text>
<text x="1283.75" y="831.2" textLength="24.99" lengthAdjust="spacingAndGlyphs">MON</text>
<text x="1343.3" y="831.2" textLength="21.48" lengthAdjust="spacingAndGlyphs">URS</text>
<text x="1412.5" y="831.2" textLength="21.33" lengthAdjust="spacingAndGlyphs">AHY</text>
<text x="1485.5" y="831.2" textLength="24.69" lengthAdjust="spacingAndGlyphs">GUM</text>
<text x="1535" y="831.2" textLength="22.4" lengthAdjust="spacingAndGlyphs">OHY</text>
<text x="1736" y="831.2" textLength="21.56" lengthAdjust="spacingAndGlyphs">XHE</text>
<text x="1770" y="831.2" textLength="16.78" lengthAdjust="spacingAndGlyphs">EVI</text>
<text x="175.2" y="815.2" textLength="21.4" lengthAdjust="spacingAndGlyphs">AVB</text>
<text x="254.5" y="815.2" textLength="18.75" lengthAdjust="spacingAndGlyphs">ELY</text>
<text x="324" y="815.2" textLength="23.39" lengthAdjust="spacingAndGlyphs">CAM</text>
<text x="431.9" y="815.2" textLength="21.3" lengthAdjust="spacingAndGlyphs">SSG</text>
<text x="578.7" y="815.2" textLength="20.69" lengthAdjust="spacingAndGlyphs">PCA</text>
<text x="720.5" y="815.2" textLength="22.78" lengthAdjust="spacingAndGlyphs">AUD</text>
<text x="808.2" y="815.2" textLength="21.99" lengthAdjust="spacingAndGlyphs">AUR</text>
<text x="930.9" y="815.2" textLength="21.78" lengthAdjust="spacingAndGlyphs">DSX</text>
<text x="1010" y="815.2" textLength="23.1" lengthAdjust="spacingAndGlyphs">OCU</text>
<text x="1137.5" y="815.2" textLength="22.03" lengthAdjust="spacingAndGlyphs">OER</text>
<text x="1255.5" y="815.2" textLength="22.88" lengthAdjust="spacingAndGlyphs">DKD</text>
<text x="1304.5" y="815.2" textLength="21.77" lengthAdjust="spacingAndGlyphs">DSV</text>
<text x="1353.5" y="815.2" textLength="19.3" lengthAdjust="spacingAndGlyphs">ALY</text>
<text x="1407.5" y="815.2" textLength="15.46" lengthAdjust="spacingAndGlyphs">ILE</text>
<text x="1471" y="815.2" textLength="21.17" lengthAdjust="spacingAndGlyphs">SCC</text>
<text x="1559.5" y="815.2" textLength="19.71" lengthAdjust="spacingAndGlyphs">FEV</text>
<text x="176.5" y="799.2" textLength="19.41" lengthAdjust="spacingAndGlyphs">LYR</text>
<text x="372.5" y="799.2" textLength="19.34" lengthAdjust="spacingAndGlyphs">JMC</text>
<text x="558.6" y="799.2" textLength="15.94" lengthAdjust="spacingAndGlyphs">JPE</text>
<text x="672" y="799.2" textLength="21.04" lengthAdjust="spacingAndGlyphs">PAU</text>
<text x="774.3" y="799.2" textLength="18" lengthAdjust="spacingAndGlyphs">NIA</text>
<text x="1049" y="799.2" textLength="20.11" lengthAdjust="spacingAndGlyphs">STA</text>
<text x="1205.4" y="799.2" textLength="24.2" lengthAdjust="spacingAndGlyphs">NOO</text>
<text x="1352.9" y="799.2" textLength="24.47" lengthAdjust="spacingAndGlyphs">COM</text>
<text x="1471" y="799.2" textLength="22.35" lengthAdjust="spacingAndGlyphs">NCC</text>
<text x="1564" y="799.2" textLength="20.6" lengthAdjust="spacingAndGlyphs">FED</text>
<text x="205.1" y="782.7" textLength="18.04" lengthAdjust="spacingAndGlyphs">HVI</text>
<text x="412" y="782.7" textLength="17.44" lengthAdjust="spacingAndGlyphs">ARI</text>
<text x="529.5" y="782.7" textLength="21.03" lengthAdjust="spacingAndGlyphs">SZC</text>
<text x="618.1" y="782.7" textLength="20.69" lengthAdjust="spacingAndGlyphs">CAP</text>
<text x="819" y="782.7" textLength="22.01" lengthAdjust="spacingAndGlyphs">NUE</text>
<text x="961.5" y="782.7" textLength="21.84" lengthAdjust="spacingAndGlyphs">OCT</text>
<text x="1059.3" y="782.7" textLength="18.51" lengthAdjust="spacingAndGlyphs">ORI</text>
<text x="1186.5" y="782.7" textLength="24.32" lengthAdjust="spacingAndGlyphs">AMO</text>
<text x="1255.5" y="782.7" textLength="21.58" lengthAdjust="spacingAndGlyphs">DPC</text>
<text x="1329" y="782.7" textLength="17.34" lengthAdjust="spacingAndGlyphs">XVI</text>
<text x="1407.5" y="782.7" textLength="22.96" lengthAdjust="spacingAndGlyphs">QUA</text>
<text x="1559.3" y="782.7" textLength="22.05" lengthAdjust="spacingAndGlyphs">AAN</text>
<text x="353" y="766.2" textLength="21.33" lengthAdjust="spacingAndGlyphs">TAH</text>
<text x="431.5" y="766.2" textLength="16.78" lengthAdjust="spacingAndGlyphs">JEA</text>
<text x="480.5" y="766.2" textLength="12.43" lengthAdjust="spacingAndGlyphs">JIP</text>
<text x="538.6" y="766.2" textLength="19.18" lengthAdjust="spacingAndGlyphs">PPS</text>
<text x="578.7" y="766.2" textLength="21.03" lengthAdjust="spacingAndGlyphs">ZCS</text>
<text x="632.5" y="766.2" textLength="23.34" lengthAdjust="spacingAndGlyphs">GDR</text>
<text x="970.4" y="766.2" textLength="22.39" lengthAdjust="spacingAndGlyphs">DRA</text>
<text x="1074" y="766.2" textLength="22.42" lengthAdjust="spacingAndGlyphs">LUM</text>
<text x="1113" y="766.2" textLength="21.15" lengthAdjust="spacingAndGlyphs">RPU</text>
<text x="1177" y="766.2" textLength="21.33" lengthAdjust="spacingAndGlyphs">THA</text>
<text x="1260" y="766.2" textLength="20.52" lengthAdjust="spacingAndGlyphs">PSU</text>
<text x="1470.3" y="766.2" textLength="21.56" lengthAdjust="spacingAndGlyphs">XCB</text>
<text x="431.5" y="749.7" textLength="17.59" lengthAdjust="spacingAndGlyphs">JRC</text>
<text x="544" y="749.7" textLength="22.2" lengthAdjust="spacingAndGlyphs">CAN</text>
<text x="578.5" y="749.7" textLength="20.92" lengthAdjust="spacingAndGlyphs">FAN</text>
<text x="681.5" y="749.7" textLength="20.11" lengthAdjust="spacingAndGlyphs">PER</text>
<text x="1049.2" y="749.7" textLength="20.77" lengthAdjust="spacingAndGlyphs">CTA</text>
<text x="1264.2" y="749.7" textLength="22.22" lengthAdjust="spacingAndGlyphs">HYD</text>
<text x="1481" y="749.7" textLength="23.76" lengthAdjust="spacingAndGlyphs">XUM</text>
<text x="441" y="733.2" textLength="22.72" lengthAdjust="spacingAndGlyphs">COR</text>
<text x="656.9" y="733.2" textLength="21.77" lengthAdjust="spacingAndGlyphs">SDA</text>
<text x="1049" y="733.2" textLength="17.87" lengthAdjust="spacingAndGlyphs">LMI</text>
<text x="1167" y="733.2" textLength="20.59" lengthAdjust="spacingAndGlyphs">LEO</text>
<text x="1274.7" y="733.2" textLength="20.78" lengthAdjust="spacingAndGlyphs">EHY</text>
<text x="1500.5" y="733.2" textLength="20.99" lengthAdjust="spacingAndGlyphs">ECV</text>
<text x="603" y="716.7" textLength="17.34" lengthAdjust="spacingAndGlyphs">JXA</text>
<text x="714.6" y="716.7" textLength="22.18" lengthAdjust="spacingAndGlyphs">KCG</text>
<text x="1157.5" y="716.7" textLength="22.95" lengthAdjust="spacingAndGlyphs">AND</text>
<text x="1275" y="716.7" textLength="23.18" lengthAdjust="spacingAndGlyphs">DAD</text>
<text x="666.25" y="700.2" textLength="16.9" lengthAdjust="spacingAndGlyphs">ERI</text>
<text x="1108.4" y="700.2" textLength="20.44" lengthAdjust="spacingAndGlyphs">SLD</text>
<text x="1211" y="700.2" textLength="22.06" lengthAdjust="spacingAndGlyphs">ORS</text>
<text x="1299.5" y="700.2" textLength="23.65" lengthAdjust="spacingAndGlyphs">GEM</text>
<text x="1123" y="684.2" textLength="23.45" lengthAdjust="spacingAndGlyphs">KUM</text>
</g>
<g stroke="#ffffff" stroke-width="2">
<path d="M113.1 834 H120.9 M117 830.1 V837.9"/>
<path d="M240.8 834 H248.6 M244.7 830.1 V837.9"/>
<path d="M510.9 834 H518.7 M514.8 830.1 V837.9"/>
<path d="M706.9 834 H714.7 M710.8 830.1 V837.9"/>
<path d="M832.8 834 H840.6 M836.7 830.1 V837.9"/>
<path d="M961.9 834 H969.7 M965.8 830.1 V837.9"/>
<path d="M985.8 834 H993.6 M989.7 830.1 V837.9"/>
<path d="M1115.8 834 H1123.6 M1119.7 830.1 V837.9"/>
<path d="M1294.8 834 H1302.6 M1298.7 830.1 V837.9"/>
<path d="M1341.9 834 H1349.7 M1345.8 830.1 V837.9"/>
<path d="M1413.1 834 H1420.9 M1417 830.1 V837.9"/>
<path d="M1481.9 834 H1489.7 M1485.8 830.1 V837.9"/>
<path d="M1530.8 834 H1538.6 M1534.7 830.1 V837.9"/>
<path d="M1731.9 834 H1739.7 M1735.8 830.1 V837.9"/>
<path d="M1766.1 834 H1773.9 M1770 830.1 V837.9"/>
<path d="M171.9 818 H179.7 M175.8 814.1 V821.9"/>
<path d="M255.8 818 H263.6 M259.7 814.1 V821.9"/>
<path d="M322.8 818 H330.6 M326.7 814.1 V821.9"/>
<path d="M437.3 818 H445.1 M441.2 814.1 V821.9"/>
<path d="M598.9 818 H606.7 M602.8 814.1 V821.9"/>
<path d="M716.9 818 H724.7 M720.8 814.1 V821.9"/>
<path d="M792.8 818 H800.6 M796.7 814.1 V821.9"/>
<path d="M938.9 818 H946.7 M942.8 814.1 V821.9"/>
<path d="M1006.1 818 H1013.9 M1010 814.1 V821.9"/>
<path d="M1152.8 818 H1160.6 M1156.7 814.1 V821.9"/>
<path d="M1250.8 818 H1258.6 M1254.7 814.1 V821.9"/>
<path d="M1299.8 818 H1307.6 M1303.7 814.1 V821.9"/>
<path d="M1348.9 818 H1356.7 M1352.8 814.1 V821.9"/>
<path d="M1402.8 818 H1410.6 M1406.7 814.1 V821.9"/>
<path d="M1466.9 818 H1474.7 M1470.8 814.1 V821.9"/>
<path d="M1554.9 818 H1562.7 M1558.8 814.1 V821.9"/>
<path d="M174.1 802 H181.9 M178 798.1 V805.9"/>
<path d="M377.8 802 H385.6 M381.7 798.1 V805.9"/>
<path d="M544.9 802 H552.7 M548.8 798.1 V805.9"/>
<path d="M681.9 802 H689.7 M685.8 798.1 V805.9"/>
<path d="M740.8 802 H748.6 M744.7 798.1 V805.9"/>
<path d="M1074.9 802 H1082.7 M1078.8 798.1 V805.9"/>
<path d="M1216.9 802 H1224.7 M1220.8 798.1 V805.9"/>
<path d="M1304.8 802 H1312.6 M1308.7 798.1 V805.9"/>
<path d="M1466.9 802 H1474.7 M1470.8 798.1 V805.9"/>
<path d="M1559.9 802 H1567.7 M1563.8 798.1 V805.9"/>
<path d="M201.9 785.5 H209.7 M205.8 781.6 V789.4"/>
<path d="M399.8 785.5 H407.6 M403.7 781.6 V789.4"/>
<path d="M524.9 785.5 H532.7 M528.8 781.6 V789.4"/>
<path d="M638.9 785.5 H646.7 M642.8 781.6 V789.4"/>
<path d="M814.9 785.5 H822.7 M818.8 781.6 V789.4"/>
<path d="M958.9 785.5 H966.7 M962.8 781.6 V789.4"/>
<path d="M1039.9 785.5 H1047.7 M1043.8 781.6 V789.4"/>
<path d="M1187.8 785.5 H1195.6 M1191.7 781.6 V789.4"/>
<path d="M1250.8 785.5 H1258.6 M1254.7 781.6 V789.4"/>
<path d="M1324.9 785.5 H1332.7 M1328.8 781.6 V789.4"/>
<path d="M1402.8 785.5 H1410.6 M1406.7 781.6 V789.4"/>
<path d="M1545.8 785.5 H1553.6 M1549.7 781.6 V789.4"/>
<path d="M355.8 769 H363.6 M359.7 765.1 V772.9"/>
<path d="M425.8 769 H433.6 M429.7 765.1 V772.9"/>
<path d="M475.8 769 H483.6 M479.7 765.1 V772.9"/>
<path d="M534.9 769 H542.7 M538.8 765.1 V772.9"/>
<path d="M570.9 769 H578.7 M574.8 765.1 V772.9"/>
<path d="M630.8 769 H638.6 M634.7 765.1 V772.9"/>
<path d="M973.9 769 H981.7 M977.8 765.1 V772.9"/>
<path d="M1069.9 769 H1077.7 M1073.8 765.1 V772.9"/>
<path d="M1108.9 769 H1116.7 M1112.8 765.1 V772.9"/>
<path d="M1177.8 769 H1185.6 M1181.7 765.1 V772.9"/>
<path d="M1255.8 769 H1263.6 M1259.7 765.1 V772.9"/>
<path d="M1466.9 769 H1474.7 M1470.8 765.1 V772.9"/>
<path d="M426.9 752.5 H434.7 M430.8 748.6 V756.4"/>
<path d="M539.9 752.5 H547.7 M543.8 748.6 V756.4"/>
<path d="M573.6 752.5 H581.4 M577.5 748.6 V756.4"/>
<path d="M703.9 752.5 H711.7 M707.8 748.6 V756.4"/>
<path d="M1093.6 752.5 H1101.4 M1097.5 748.6 V756.4"/>
<path d="M1271.1 752.5 H1278.9 M1275 748.6 V756.4"/>
<path d="M1476.9 752.5 H1484.7 M1480.8 748.6 V756.4"/>
<path d="M436.9 736 H444.7 M440.8 732.1 V739.9"/>
<path d="M630.8 736 H638.6 M634.7 732.1 V739.9"/>
<path d="M1038.9 736 H1046.7 M1042.8 732.1 V739.9"/>
<path d="M1167.8 736 H1175.6 M1171.7 732.1 V739.9"/>
<path d="M1274.9 736 H1282.7 M1278.8 732.1 V739.9"/>
<path d="M1496.9 736 H1504.7 M1500.8 732.1 V739.9"/>
<path d="M598.9 719.5 H606.7 M602.8 715.6 V723.4"/>
<path d="M726.9 719.5 H734.7 M730.8 715.6 V723.4"/>
<path d="M1188.1 719.5 H1195.9 M1192 715.6 V723.4"/>
<path d="M1271.1 719.5 H1278.9 M1275 715.6 V723.4"/>
<path d="M686.9 703 H694.7 M690.8 699.1 V706.9"/>
<path d="M1101.9 703 H1109.7 M1105.8 699.1 V706.9"/>
<path d="M1206.9 703 H1214.7 M1210.8 699.1 V706.9"/>
<path d="M1299.9 703 H1307.7 M1303.8 699.1 V706.9"/>
<path d="M1118.9 687 H1126.7 M1122.8 683.1 V690.9"/>
</g>
<path d="M1326 641.5 V842.5" stroke="#ff0000" stroke-width="2.3" stroke-dasharray="5.1 2.29" stroke-dashoffset="2.9"/>
<rect x="19.8" y="641.5" width="1765.7" height="201" fill="none" stroke="#ffffff" stroke-width="1.1"/>
<g stroke="#ffffff" stroke-width="1.1">
<path d="M19.8 842.5 V847.4"/>
<path d="M265.04 842.5 V847.4"/>
<path d="M510.27 842.5 V847.4"/>
<path d="M755.51 842.5 V847.4"/>
<path d="M1000.74 842.5 V847.4"/>
<path d="M1245.98 842.5 V847.4"/>
<path d="M1491.22 842.5 V847.4"/>
<path d="M1736.45 842.5 V847.4"/>
</g>
<g font-family="Liberation Sans, sans-serif" font-size="13.89" fill="#ffffff" text-anchor="middle">
<text x="19.8" y="862.2" textLength="8.13" lengthAdjust="spacingAndGlyphs">0</text>
<text x="265.04" y="862.2" textLength="16.26" lengthAdjust="spacingAndGlyphs">50</text>
<text x="510.27" y="862.2" textLength="24.39" lengthAdjust="spacingAndGlyphs">100</text>
<text x="755.51" y="862.2" textLength="24.39" lengthAdjust="spacingAndGlyphs">150</text>
<text x="1000.74" y="862.2" textLength="24.39" lengthAdjust="spacingAndGlyphs">200</text>
<text x="1245.98" y="862.2" textLength="24.39" lengthAdjust="spacingAndGlyphs">250</text>
<text x="1491.22" y="862.2" textLength="24.39" lengthAdjust="spacingAndGlyphs">300</text>
<text x="1736.45" y="862.2" textLength="24.39" lengthAdjust="spacingAndGlyphs">350</text>
<text x="902.2" y="882.2" textLength="146.69" lengthAdjust="spacingAndGlyphs">Solar longitude (deg)</text>
</g>
</svg>
</body></html>
